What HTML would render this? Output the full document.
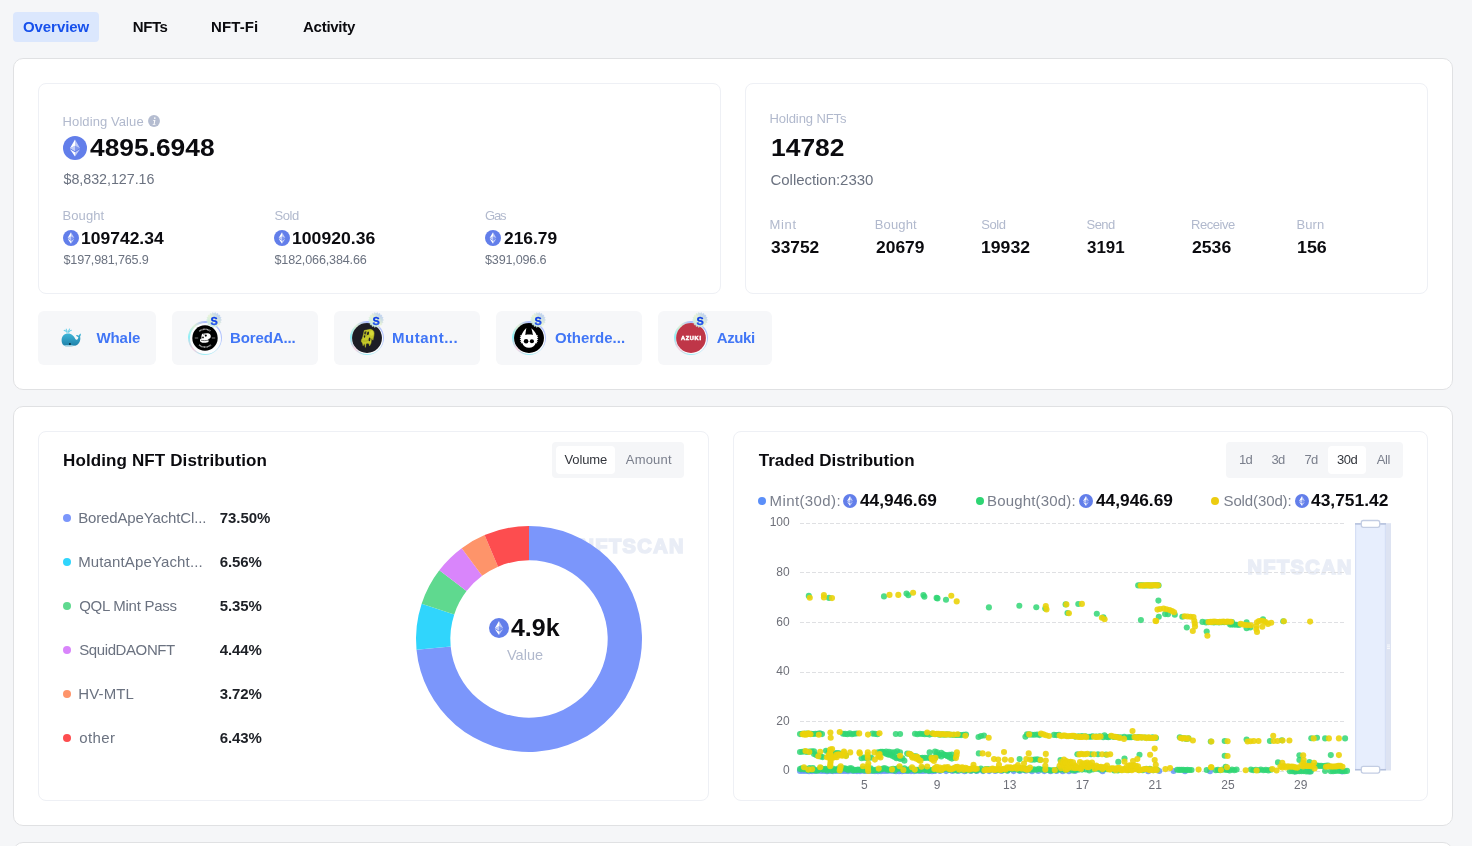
<!DOCTYPE html>
<html lang="en"><head><meta charset="utf-8"><title>NFTScan - Wallet Overview</title>
<style>
*{box-sizing:border-box;margin:0;padding:0}
html,body{width:1472px;height:846px;overflow:hidden}
body{will-change:transform;background:#f5f6f8;font-family:"Liberation Sans",Arial,sans-serif;position:relative;-webkit-font-smoothing:antialiased}
.t{position:absolute;white-space:nowrap;display:block}
.abs,.eth,svg.ab{position:absolute;display:block}
.card{position:absolute;left:13px;width:1440px;background:#fff;border:1px solid #e0e1e3;border-radius:10px}
.inner{position:absolute;background:#fff;border:1px solid #eef0f5;border-radius:8px}
.tab-on{position:absolute;left:13px;top:12px;width:86px;height:30px;border-radius:4px;background:#dbe7fd}
.tag{position:absolute;top:311px;height:54px;border-radius:6px;background:#f6f7f9}
.seg{position:absolute;height:36px;border-radius:4px;background:#f5f6f8}
.seg i{position:absolute;display:block;top:4px;height:28px;border-radius:4px;background:#fff}
.dot{position:absolute;width:8px;height:8px;border-radius:50%}
.ring{position:absolute;display:block;width:34px;height:34px;border-radius:50%;opacity:.85;background:conic-gradient(from 0deg,#9fb2ff 0deg,#a8bcfd 100deg,#bfe6f6 140deg,#8aeef6 185deg,#f6c6da 228deg,#7ceff8 275deg,#dcefd2 318deg,#9fb2ff 360deg)}
.ring i{position:absolute;display:block;left:1.5px;top:1.5px;right:1.5px;bottom:1.5px;border-radius:50%;background:#fff}
.wm{position:absolute;font-weight:700;font-size:20px;line-height:20px;letter-spacing:1.4px;color:#e9edf6;-webkit-text-stroke:1.6px #e9edf6;white-space:nowrap}
</style></head>
<body>
<nav class="tabs"><div class="tab-on"></div><a class="t" style="left:23.00px;top:18.00px;font-size:15px;line-height:17px;letter-spacing:-0.077px;color:#1650ec;font-weight:700;">Overview</a><a class="t" style="left:132.75px;top:18.00px;font-size:15px;line-height:17px;letter-spacing:-0.431px;color:#0b0b0f;font-weight:700;">NFTs</a><a class="t" style="left:211.00px;top:18.00px;font-size:15px;line-height:17px;letter-spacing:0.102px;color:#0b0b0f;font-weight:700;">NFT-Fi</a><a class="t" style="left:303.00px;top:18.00px;font-size:15px;line-height:17px;letter-spacing:-0.263px;color:#0b0b0f;font-weight:700;">Activity</a></nav>
<section class="card" style="top:58px;height:332px">
<div class="inner" style="left:24px;top:24px;width:683px;height:211px">
<span class="t" style="left:23.60px;top:30.00px;font-size:13px;line-height:15px;letter-spacing:0.087px;color:#b1b9cd;">Holding Value</span>
<svg class="ab" style="left:109px;top:31px;width:12px;height:12px" viewBox="0 0 12 12"><circle cx="6" cy="6" r="5.950" fill="#b4bcd0"/><circle cx="6.800" cy="3.100" r=".85" fill="#fff"/><path d="M5 4.900h2.400l-.75 4h.9l-.15.9H4.600l.15-.9h.9l.55-3.100h-.95z" fill="#fff"/></svg>
<svg class="eth" style="left:24px;top:52px;width:24px;height:24px" viewBox="0 0 32 32"><circle cx="16" cy="16" r="16" fill="#627eea"/><g fill="#fff" transform="translate(16 16) scale(.9 .94) translate(-16.5 -16)"><path fill-opacity=".6" d="M16.5 4v8.87l7.5 3.35z"/><path d="M16.5 4L9 16.22l7.5-3.35z"/><path fill-opacity=".6" d="M16.5 21.97v6.03L24 17.62z"/><path d="M16.5 28v-6.03L9 17.62z"/><path fill-opacity=".2" d="M16.5 20.57l7.5-4.35-7.5-3.35z"/><path fill-opacity=".6" d="M9 16.22l7.5 4.35v-7.7z"/></g></svg>
<span class="t" style="left:50.60px;top:51.40px;font-size:24px;line-height:26px;letter-spacing:0.000px;color:#0b0b0f;font-weight:700;transform:scaleX(1.0977);transform-origin:0 0;">4895.6948</span>
<span class="t" style="left:24.50px;top:86.50px;font-size:14.3px;line-height:17px;letter-spacing:-0.040px;color:#6b7280;">$8,832,127.16</span>
<span class="t" style="left:23.50px;top:124.00px;font-size:13px;line-height:15px;letter-spacing:0.082px;color:#b1b9cd;">Bought</span>
<svg class="eth" style="left:24.2px;top:146.2px;width:16px;height:16px" viewBox="0 0 32 32"><circle cx="16" cy="16" r="16" fill="#627eea"/><g fill="#fff" transform="translate(16 16) scale(.9 .94) translate(-16.5 -16)"><path fill-opacity=".6" d="M16.5 4v8.87l7.5 3.35z"/><path d="M16.5 4L9 16.22l7.5-3.35z"/><path fill-opacity=".6" d="M16.5 21.97v6.03L24 17.62z"/><path d="M16.5 28v-6.03L9 17.62z"/><path fill-opacity=".2" d="M16.5 20.57l7.5-4.35-7.5-3.35z"/><path fill-opacity=".6" d="M9 16.22l7.5 4.35v-7.7z"/></g></svg>
<span class="t" style="left:41.94px;top:144.50px;font-size:16.5px;line-height:19px;letter-spacing:0.000px;color:#0b0b0f;font-weight:700;transform:scaleX(1.0601);transform-origin:0 0;">109742.34</span>
<span class="t" style="left:24.50px;top:168.50px;font-size:12.6px;line-height:15px;letter-spacing:-0.176px;color:#6b7280;">$197,981,765.9</span>
<span class="t" style="left:235.50px;top:124.00px;font-size:13px;line-height:15px;letter-spacing:-0.430px;color:#b1b9cd;">Sold</span>
<svg class="eth" style="left:235.2px;top:146.2px;width:16px;height:16px" viewBox="0 0 32 32"><circle cx="16" cy="16" r="16" fill="#627eea"/><g fill="#fff" transform="translate(16 16) scale(.9 .94) translate(-16.5 -16)"><path fill-opacity=".6" d="M16.5 4v8.87l7.5 3.35z"/><path d="M16.5 4L9 16.22l7.5-3.35z"/><path fill-opacity=".6" d="M16.5 21.97v6.03L24 17.62z"/><path d="M16.5 28v-6.03L9 17.62z"/><path fill-opacity=".2" d="M16.5 20.57l7.5-4.35-7.5-3.35z"/><path fill-opacity=".6" d="M9 16.22l7.5 4.35v-7.7z"/></g></svg>
<span class="t" style="left:252.93px;top:144.50px;font-size:16.5px;line-height:19px;letter-spacing:0.000px;color:#0b0b0f;font-weight:700;transform:scaleX(1.0674);transform-origin:0 0;">100920.36</span>
<span class="t" style="left:235.50px;top:168.50px;font-size:12.6px;line-height:15px;letter-spacing:-0.164px;color:#6b7280;">$182,066,384.66</span>
<span class="t" style="left:446.00px;top:124.00px;font-size:13px;line-height:15px;letter-spacing:-1.200px;color:#b1b9cd;">Gas</span>
<svg class="eth" style="left:446.2px;top:146.2px;width:16px;height:16px" viewBox="0 0 32 32"><circle cx="16" cy="16" r="16" fill="#627eea"/><g fill="#fff" transform="translate(16 16) scale(.9 .94) translate(-16.5 -16)"><path fill-opacity=".6" d="M16.5 4v8.87l7.5 3.35z"/><path d="M16.5 4L9 16.22l7.5-3.35z"/><path fill-opacity=".6" d="M16.5 21.97v6.03L24 17.62z"/><path d="M16.5 28v-6.03L9 17.62z"/><path fill-opacity=".2" d="M16.5 20.57l7.5-4.35-7.5-3.35z"/><path fill-opacity=".6" d="M9 16.22l7.5 4.35v-7.7z"/></g></svg>
<span class="t" style="left:464.50px;top:144.50px;font-size:16.5px;line-height:19px;letter-spacing:0.000px;color:#0b0b0f;font-weight:700;transform:scaleX(1.0539);transform-origin:0 0;">216.79</span>
<span class="t" style="left:446.00px;top:168.50px;font-size:12.6px;line-height:15px;letter-spacing:-0.170px;color:#6b7280;">$391,096.6</span>
</div>
<div class="inner" style="left:731px;top:24px;width:683px;height:211px">
<span class="t" style="left:23.50px;top:27.00px;font-size:13px;line-height:15px;letter-spacing:-0.093px;color:#b1b9cd;">Holding NFTs</span>
<span class="t" style="left:24.67px;top:49.50px;font-size:24.5px;line-height:27px;letter-spacing:0.000px;color:#0b0b0f;font-weight:700;transform:scaleX(1.0789);transform-origin:0 0;">14782</span>
<span class="t" style="left:24.50px;top:87.00px;font-size:15px;line-height:17px;letter-spacing:-0.040px;color:#6b7280;">Collection:2330</span>
<span class="t" style="left:23.50px;top:133.25px;font-size:13px;line-height:15px;letter-spacing:0.684px;color:#b1b9cd;">Mint</span>
<span class="t" style="left:128.75px;top:133.25px;font-size:13px;line-height:15px;letter-spacing:0.132px;color:#b1b9cd;">Bought</span>
<span class="t" style="left:235.25px;top:133.25px;font-size:13px;line-height:15px;letter-spacing:-0.430px;color:#b1b9cd;">Sold</span>
<span class="t" style="left:340.50px;top:133.25px;font-size:13px;line-height:15px;letter-spacing:-0.544px;color:#b1b9cd;">Send</span>
<span class="t" style="left:445.00px;top:133.25px;font-size:13px;line-height:15px;letter-spacing:-0.456px;color:#b1b9cd;">Receive</span>
<span class="t" style="left:550.50px;top:133.25px;font-size:13px;line-height:15px;letter-spacing:0.090px;color:#b1b9cd;">Burn</span>
<span class="t" style="left:24.50px;top:153.50px;font-size:16.5px;line-height:19px;letter-spacing:0.000px;color:#0b0b0f;font-weight:700;transform:scaleX(1.0502);transform-origin:0 0;">33752</span>
<span class="t" style="left:130.00px;top:153.50px;font-size:16.5px;line-height:19px;letter-spacing:0.000px;color:#0b0b0f;font-weight:700;transform:scaleX(1.0557);transform-origin:0 0;">20679</span>
<span class="t" style="left:234.68px;top:153.50px;font-size:16.5px;line-height:19px;letter-spacing:0.000px;color:#0b0b0f;font-weight:700;transform:scaleX(1.0681);transform-origin:0 0;">19932</span>
<span class="t" style="left:341.00px;top:153.50px;font-size:16.5px;line-height:19px;letter-spacing:0.000px;color:#0b0b0f;font-weight:700;transform:scaleX(1.0266);transform-origin:0 0;">3191</span>
<span class="t" style="left:446.00px;top:153.50px;font-size:16.5px;line-height:19px;letter-spacing:0.000px;color:#0b0b0f;font-weight:700;transform:scaleX(1.0676);transform-origin:0 0;">2536</span>
<span class="t" style="left:550.92px;top:153.50px;font-size:16.5px;line-height:19px;letter-spacing:0.000px;color:#0b0b0f;font-weight:700;transform:scaleX(1.0815);transform-origin:0 0;">156</span>
</div>
<div class="tags"><div class="tag" style="left:24px;top:252px;width:118px"><svg class="ab" style="left:23px;top:17px;width:20px;height:20px" viewBox="0 0 20 20"><defs><linearGradient id="wg" x1="0" y1="0" x2="0" y2="1"><stop offset="0" stop-color="#3fb6d8"/><stop offset="1" stop-color="#1d7fa8"/></linearGradient></defs><path d="M5.2 1.2c.6.9 1 1.700 1 3M8.600 1c-.7.9-1.200 1.800-1.200 3.200M3.200 2.400c1.200.2 2.200.9 2.700 1.800M10.400 2.200c-1.200.2-2 .9-2.500 1.900" stroke="#6fd0ea" stroke-width="1.100" fill="none" stroke-linecap="round"/><path d="M.6 12.200C.6 8 3.400 5.400 7 5.400c3.700 0 6 2.600 7.200 5.300.5 1.100 1.300 1.400 2.100.8.700-.6 1-1.600 1-2.600-.9-.1-1.800-.7-2.200-1.700 1-.3 2-.1 2.700.500.2-1 .9-1.900 1.900-2.300.3 1.100.1 2.200-.6 3 .6 2.100.2 4.700-1.100 6.500-1.500 2.100-4 3.300-7.600 3.300H5.600C2.600 18.200.6 16 .6 12.200z" fill="url(#wg)"/><path d="M2.200 16.800c1.600 1 4 1.400 7.200 1.400 2 0 3.700-.4 5-1.100-1.400.2-3.400.3-5.600.2-2.600-.1-4.900-.3-6.600-.5z" fill="#bfe9f5"/><circle cx="8.900" cy="16" r=".95" fill="#0b2a3a"/></svg><span class="t" style="left:58.40px;top:18.00px;font-size:15px;line-height:17px;letter-spacing:-0.058px;color:#4176f6;font-weight:700;">Whale</span></div>
<div class="tag" style="left:158px;top:252px;width:146px"><span class="ring" style="left:16px;top:10px"><i></i></span><svg class="ab" style="left:20.2px;top:13.9px;width:26px;height:26px" viewBox="0 0 26 26"><circle cx="13" cy="13" r="12.7" fill="#000"/><path d="M10.3 8.7L15 8.3C17.500 8 19 9.600 18.800 11.400C18.700 12.800 17.600 13.700 16.300 13.900L16.600 16.700C15 18 10.500 18.100 8.600 16.900C7.700 16 7.800 14.400 8.800 13.800L9.600 13.400C9.200 12 9.400 10 10.300 8.700Z" fill="#fff"/><circle cx="13.800" cy="10.600" r="1.050" fill="#000"/><circle cx="11" cy="12.400" r=".85" fill="#000"/><path d="M11.6 8.600l.5 1.500M9 15.200c2 .6 5 .6 7.400-.1" stroke="#000" stroke-width=".55" fill="none"/><path d="M2.800 13h3.400M19.800 13h3.400" stroke="#fff" stroke-width=".6" opacity=".8"/><path d="M7.300 6.300A8.800 8.800 0 0 1 18.700 6.300" stroke="#fff" stroke-width="1.400" stroke-dasharray=".9 .45" fill="none" opacity=".75"/><path d="M7.100 19.900A9.100 9.100 0 0 0 18.900 19.900" stroke="#fff" stroke-width="1.400" stroke-dasharray=".9 .45" fill="none" opacity=".75"/></svg><svg class="ab" style="left:34.3px;top:1.0px;width:16px;height:16px" viewBox="-8 -8 16 16"><defs><linearGradient id="bg1" x1="0" y1="1" x2="1" y2="0"><stop offset="0" stop-color="#b9e8ea"/><stop offset=".5" stop-color="#e8f3d6"/><stop offset="1" stop-color="#a3bcfb"/></linearGradient><linearGradient id="bs1" x1="0" y1="0" x2="0" y2="1"><stop offset="0" stop-color="#0433e6"/><stop offset=".55" stop-color="#0a3ce8"/><stop offset="1" stop-color="#6f98ef"/></linearGradient></defs><polygon points="7.50,0.00 6.11,1.08 7.05,2.57 5.37,3.10 5.75,4.82 3.99,4.75 3.75,6.50 2.12,5.83 1.30,7.39 0.00,6.20 -1.30,7.39 -2.12,5.83 -3.75,6.50 -3.99,4.75 -5.75,4.82 -5.37,3.10 -7.05,2.57 -6.11,1.08 -7.50,0.00 -6.11,-1.08 -7.05,-2.57 -5.37,-3.10 -5.75,-4.82 -3.99,-4.75 -3.75,-6.50 -2.12,-5.83 -1.30,-7.39 -0.00,-6.20 1.30,-7.39 2.12,-5.83 3.75,-6.50 3.99,-4.75 5.75,-4.82 5.37,-3.10 7.05,-2.57 6.11,-1.08" fill="url(#bg1)" stroke="url(#bg1)" stroke-width=".6" stroke-linejoin="round"/><text x="0" y="5.0" transform="translate(.1 0) scale(.95 1)" text-anchor="middle" font-family="Liberation Sans, sans-serif" font-weight="700" font-size="11.5" fill="url(#bs1)" stroke="#0a3ce8" stroke-width=".3">S</text></svg><span class="t" style="left:58.10px;top:18.00px;font-size:15px;line-height:17px;letter-spacing:-0.138px;color:#4176f6;font-weight:700;">BoredA...</span></div>
<div class="tag" style="left:320px;top:252px;width:146px"><span class="ring" style="left:16px;top:10px"><i></i></span><svg class="ab" style="left:18px;top:12px;width:30px;height:30px" viewBox="0 0 30 30"><circle cx="15" cy="15" r="14.950" fill="#1d1d25"/><path d="M18.100 6.300C20.500 6.500 22.300 8 22.100 10.400C22 12 21.900 13 21.500 14.100L20.900 17.200L20.200 15.200L19.400 16L19 20.100L17.600 22.800L17 20.500L15.600 20.300L14 20.600L13.400 24.400L12.800 21L12 20.800L11.100 22.700L10.600 20C9.600 19.400 9.200 18.400 9.400 17.400C9.500 16.400 9.900 15.800 10.400 15.200L11.500 11.200L12.200 7.600C13.500 7.200 15 7 18.100 6.300Z" fill="#c5c929" stroke="#c5c929" stroke-width=".5" stroke-linejoin="round"/><ellipse cx="19.600" cy="10.200" rx="1.700" ry="2.600" fill="#d9dd3e" opacity=".8"/><g fill="#1d1d25"><ellipse cx="13.100" cy="9.900" rx=".75" ry="1.650" transform="rotate(8 13.100 9.900)"/><ellipse cx="16" cy="10.300" rx=".95" ry="1.850" transform="rotate(10 16 10.300)"/><ellipse cx="12.500" cy="13.500" rx=".7" ry="1.250"/><ellipse cx="17.500" cy="16.400" rx=".9" ry="1.900" transform="rotate(8 17.500 16.400)"/></g><path d="M14.400 8l-.5 5.200" stroke="#1d1d25" stroke-width=".45" opacity=".7"/><path d="M10.300 17.800c2 .5 4 .4 5.600-.4" stroke="#9a9e1c" stroke-width=".8" fill="none" opacity=".8"/></svg><svg class="ab" style="left:34.3px;top:1.0px;width:16px;height:16px" viewBox="-8 -8 16 16"><defs><linearGradient id="bg2" x1="0" y1="1" x2="1" y2="0"><stop offset="0" stop-color="#b9e8ea"/><stop offset=".5" stop-color="#e8f3d6"/><stop offset="1" stop-color="#a3bcfb"/></linearGradient><linearGradient id="bs2" x1="0" y1="0" x2="0" y2="1"><stop offset="0" stop-color="#0433e6"/><stop offset=".55" stop-color="#0a3ce8"/><stop offset="1" stop-color="#6f98ef"/></linearGradient></defs><polygon points="7.50,0.00 6.11,1.08 7.05,2.57 5.37,3.10 5.75,4.82 3.99,4.75 3.75,6.50 2.12,5.83 1.30,7.39 0.00,6.20 -1.30,7.39 -2.12,5.83 -3.75,6.50 -3.99,4.75 -5.75,4.82 -5.37,3.10 -7.05,2.57 -6.11,1.08 -7.50,0.00 -6.11,-1.08 -7.05,-2.57 -5.37,-3.10 -5.75,-4.82 -3.99,-4.75 -3.75,-6.50 -2.12,-5.83 -1.30,-7.39 -0.00,-6.20 1.30,-7.39 2.12,-5.83 3.75,-6.50 3.99,-4.75 5.75,-4.82 5.37,-3.10 7.05,-2.57 6.11,-1.08" fill="url(#bg2)" stroke="url(#bg2)" stroke-width=".6" stroke-linejoin="round"/><text x="0" y="5.0" transform="translate(.1 0) scale(.95 1)" text-anchor="middle" font-family="Liberation Sans, sans-serif" font-weight="700" font-size="11.5" fill="url(#bs2)" stroke="#0a3ce8" stroke-width=".3">S</text></svg><span class="t" style="left:58.10px;top:18.00px;font-size:15px;line-height:17px;letter-spacing:0.489px;color:#4176f6;font-weight:700;">Mutant...</span></div>
<div class="tag" style="left:482px;top:252px;width:146px"><span class="ring" style="left:16px;top:10px"><i></i></span><svg class="ab" style="left:18px;top:12px;width:30px;height:30px" viewBox="0 0 30 30"><circle cx="15" cy="15" r="14.950" fill="#000"/><path d="M12.400 5C11.900 7.400 11.500 9.600 11.300 11.900C13.500 11.300 16.800 11.300 18.900 11.900C18.600 9.600 18 7.400 17.300 5.200C19.600 7 21.600 9.400 22.600 12.200L23.900 11.900L23.100 13.600L24.300 14.200L23 15.400L24.400 16.500L22.900 17.200L24 18.800L22.600 18.700L23.200 20.400L21.800 20C20.900 22.800 18.200 24.800 15 24.800C11.800 24.800 9.100 22.800 8.200 20L6.800 20.400L7.400 18.700L6 18.800L7.100 17.200L5.600 16.500L7 15.400L5.700 14.200L6.900 13.600L6.100 11.900L7.400 12.200C8.400 9.400 10.400 7 12.400 5Z" fill="#fff"/><ellipse cx="12.100" cy="18.300" rx="2.300" ry="2.200" fill="#000"/><ellipse cx="17.900" cy="18.300" rx="2.100" ry="2" fill="#000"/></svg><svg class="ab" style="left:34.3px;top:1.0px;width:16px;height:16px" viewBox="-8 -8 16 16"><defs><linearGradient id="bg3" x1="0" y1="1" x2="1" y2="0"><stop offset="0" stop-color="#b9e8ea"/><stop offset=".5" stop-color="#e8f3d6"/><stop offset="1" stop-color="#a3bcfb"/></linearGradient><linearGradient id="bs3" x1="0" y1="0" x2="0" y2="1"><stop offset="0" stop-color="#0433e6"/><stop offset=".55" stop-color="#0a3ce8"/><stop offset="1" stop-color="#6f98ef"/></linearGradient></defs><polygon points="7.50,0.00 6.11,1.08 7.05,2.57 5.37,3.10 5.75,4.82 3.99,4.75 3.75,6.50 2.12,5.83 1.30,7.39 0.00,6.20 -1.30,7.39 -2.12,5.83 -3.75,6.50 -3.99,4.75 -5.75,4.82 -5.37,3.10 -7.05,2.57 -6.11,1.08 -7.50,0.00 -6.11,-1.08 -7.05,-2.57 -5.37,-3.10 -5.75,-4.82 -3.99,-4.75 -3.75,-6.50 -2.12,-5.83 -1.30,-7.39 -0.00,-6.20 1.30,-7.39 2.12,-5.83 3.75,-6.50 3.99,-4.75 5.75,-4.82 5.37,-3.10 7.05,-2.57 6.11,-1.08" fill="url(#bg3)" stroke="url(#bg3)" stroke-width=".6" stroke-linejoin="round"/><text x="0" y="5.0" transform="translate(.1 0) scale(.95 1)" text-anchor="middle" font-family="Liberation Sans, sans-serif" font-weight="700" font-size="11.5" fill="url(#bs3)" stroke="#0a3ce8" stroke-width=".3">S</text></svg><span class="t" style="left:59.10px;top:18.00px;font-size:15px;line-height:17px;letter-spacing:-0.005px;color:#4176f6;font-weight:700;">Otherde...</span></div>
<div class="tag" style="left:644px;top:252px;width:114px"><span class="ring" style="left:16px;top:10px"><i></i></span><svg class="ab" style="left:18px;top:12px;width:30px;height:30px" viewBox="0 0 30 30"><circle cx="15" cy="15" r="14.900" fill="#bf3648"/><text x="15.300" y="17.300" text-anchor="middle" font-family="Liberation Sans, sans-serif" font-weight="700" font-size="5.600" letter-spacing=".75" fill="#fff" stroke="#fff" stroke-width=".5">AZUKI</text></svg><svg class="ab" style="left:34.3px;top:1.0px;width:16px;height:16px" viewBox="-8 -8 16 16"><defs><linearGradient id="bg4" x1="0" y1="1" x2="1" y2="0"><stop offset="0" stop-color="#b9e8ea"/><stop offset=".5" stop-color="#e8f3d6"/><stop offset="1" stop-color="#a3bcfb"/></linearGradient><linearGradient id="bs4" x1="0" y1="0" x2="0" y2="1"><stop offset="0" stop-color="#0433e6"/><stop offset=".55" stop-color="#0a3ce8"/><stop offset="1" stop-color="#6f98ef"/></linearGradient></defs><polygon points="7.50,0.00 6.11,1.08 7.05,2.57 5.37,3.10 5.75,4.82 3.99,4.75 3.75,6.50 2.12,5.83 1.30,7.39 0.00,6.20 -1.30,7.39 -2.12,5.83 -3.75,6.50 -3.99,4.75 -5.75,4.82 -5.37,3.10 -7.05,2.57 -6.11,1.08 -7.50,0.00 -6.11,-1.08 -7.05,-2.57 -5.37,-3.10 -5.75,-4.82 -3.99,-4.75 -3.75,-6.50 -2.12,-5.83 -1.30,-7.39 -0.00,-6.20 1.30,-7.39 2.12,-5.83 3.75,-6.50 3.99,-4.75 5.75,-4.82 5.37,-3.10 7.05,-2.57 6.11,-1.08" fill="url(#bg4)" stroke="url(#bg4)" stroke-width=".6" stroke-linejoin="round"/><text x="0" y="5.0" transform="translate(.1 0) scale(.95 1)" text-anchor="middle" font-family="Liberation Sans, sans-serif" font-weight="700" font-size="11.5" fill="url(#bs4)" stroke="#0a3ce8" stroke-width=".3">S</text></svg><span class="t" style="left:58.70px;top:18.00px;font-size:15px;line-height:17px;letter-spacing:-0.384px;color:#4176f6;font-weight:700;">Azuki</span></div></div>
</section>
<section class="card" style="top:406px;height:420px">
<div class="inner" style="left:24px;top:24px;width:671px;height:370px">
<h3 class="t" style="left:24.00px;top:19.00px;font-size:17px;line-height:19px;letter-spacing:0.120px;color:#0b0b0f;font-weight:700;">Holding NFT Distribution</h3>
<div class="seg" style="left:513px;top:10px;width:132px"><i style="left:4px;width:59px"></i></div>
<span class="t" style="left:525.50px;top:19.90px;font-size:13px;line-height:15px;letter-spacing:-0.126px;color:#33363d;">Volume</span>
<span class="t" style="left:586.75px;top:19.90px;font-size:13px;line-height:15px;letter-spacing:0.212px;color:#7a7f8c;">Amount</span>
<span class="dot" style="left:24px;top:82px;background:#7b96fb"></span>
<span class="t" style="left:39.20px;top:77.30px;font-size:15px;line-height:17px;letter-spacing:-0.145px;color:#6b7280;">BoredApeYachtCl...</span>
<span class="t" style="left:180.70px;top:77.30px;font-size:15px;line-height:17px;letter-spacing:-0.027px;color:#1d2026;font-weight:700;">73.50%</span>
<span class="dot" style="left:24px;top:126px;background:#30d5fc"></span>
<span class="t" style="left:39.20px;top:121.30px;font-size:15px;line-height:17px;letter-spacing:0.136px;color:#6b7280;">MutantApeYacht...</span>
<span class="t" style="left:180.70px;top:121.30px;font-size:15px;line-height:17px;letter-spacing:-0.099px;color:#1d2026;font-weight:700;">6.56%</span>
<span class="dot" style="left:24px;top:170px;background:#5fd98f"></span>
<span class="t" style="left:40.20px;top:165.30px;font-size:15px;line-height:17px;letter-spacing:-0.283px;color:#6b7280;">QQL Mint Pass</span>
<span class="t" style="left:180.70px;top:165.30px;font-size:15px;line-height:17px;letter-spacing:-0.099px;color:#1d2026;font-weight:700;">5.35%</span>
<span class="dot" style="left:24px;top:214px;background:#d985fb"></span>
<span class="t" style="left:40.20px;top:209.30px;font-size:15px;line-height:17px;letter-spacing:-0.396px;color:#6b7280;">SquidDAONFT</span>
<span class="t" style="left:180.70px;top:209.30px;font-size:15px;line-height:17px;letter-spacing:-0.099px;color:#1d2026;font-weight:700;">4.44%</span>
<span class="dot" style="left:24px;top:258px;background:#fe946a"></span>
<span class="t" style="left:39.20px;top:253.30px;font-size:15px;line-height:17px;letter-spacing:0.147px;color:#6b7280;">HV-MTL</span>
<span class="t" style="left:180.70px;top:253.30px;font-size:15px;line-height:17px;letter-spacing:-0.099px;color:#1d2026;font-weight:700;">3.72%</span>
<span class="dot" style="left:24px;top:302px;background:#fd4d4f"></span>
<span class="t" style="left:40.20px;top:297.30px;font-size:15px;line-height:17px;letter-spacing:0.376px;color:#6b7280;">other</span>
<span class="t" style="left:180.70px;top:297.30px;font-size:15px;line-height:17px;letter-spacing:-0.099px;color:#1d2026;font-weight:700;">6.43%</span>
<span class="wm" style="left:540.5px;top:104px">NFTSCAN</span>
<svg class="ab" style="left:375.0px;top:91.65px;width:230px;height:230px" viewBox="-115 -115 230 230"><path d="M0.00 -113.00A113.0 113.0 0 1 1 -112.50 10.63L-78.35 7.41A78.7 78.7 0 1 0 0.00 -78.70Z" fill="#7b96fb"/><path d="M-112.50 10.63A113.0 113.0 0 0 1 -107.34 -35.32L-74.76 -24.60A78.7 78.7 0 0 0 -78.35 7.41Z" fill="#30d5fc"/><path d="M-107.34 -35.32A113.0 113.0 0 0 1 -89.68 -68.75L-62.46 -47.88A78.7 78.7 0 0 0 -74.76 -24.60Z" fill="#5fd98f"/><path d="M-89.68 -68.75A113.0 113.0 0 0 1 -67.28 -90.79L-46.86 -63.23A78.7 78.7 0 0 0 -62.46 -47.88Z" fill="#d985fb"/><path d="M-67.28 -90.79A113.0 113.0 0 0 1 -44.42 -103.90L-30.94 -72.36A78.7 78.7 0 0 0 -46.86 -63.23Z" fill="#fe946a"/><path d="M-44.42 -103.90A113.0 113.0 0 0 1 -0.00 -113.00L-0.00 -78.70A78.7 78.7 0 0 0 -30.94 -72.36Z" fill="#fd4d4f"/></svg>
<svg class="eth" style="left:450px;top:186.3px;width:20px;height:20px" viewBox="0 0 32 32"><circle cx="16" cy="16" r="16" fill="#627eea"/><g fill="#fff" transform="translate(16 16) scale(.9 .94) translate(-16.5 -16)"><path fill-opacity=".6" d="M16.5 4v8.87l7.5 3.35z"/><path d="M16.5 4L9 16.22l7.5-3.35z"/><path fill-opacity=".6" d="M16.5 21.97v6.03L24 17.62z"/><path d="M16.5 28v-6.03L9 17.62z"/><path fill-opacity=".2" d="M16.5 20.57l7.5-4.35-7.5-3.35z"/><path fill-opacity=".6" d="M9 16.22l7.5 4.35v-7.7z"/></g></svg>
<span class="t" style="left:472.30px;top:183.10px;font-size:24px;line-height:26px;letter-spacing:0.000px;color:#0b0b0f;font-weight:700;transform:scaleX(1.0388);transform-origin:0 0;">4.9k</span>
<span class="t" style="left:468.00px;top:214.70px;font-size:14.5px;line-height:17px;letter-spacing:0.014px;color:#b1b9cd;">Value</span>
</div>
<div class="inner" style="left:719px;top:24px;width:695px;height:370px">
<h3 class="t" style="left:24.75px;top:19.00px;font-size:17px;line-height:19px;letter-spacing:0.003px;color:#0b0b0f;font-weight:700;">Traded Distribution</h3>
<div class="seg" style="left:492px;top:10px;width:177px"><i style="left:102px;width:38px"></i></div>
<span class="t" style="left:505.00px;top:19.90px;font-size:13px;line-height:15px;letter-spacing:-0.730px;color:#7a7f8c;">1d</span>
<span class="t" style="left:537.50px;top:19.90px;font-size:13px;line-height:15px;letter-spacing:-0.730px;color:#7a7f8c;">3d</span>
<span class="t" style="left:570.50px;top:19.90px;font-size:13px;line-height:15px;letter-spacing:-0.730px;color:#7a7f8c;">7d</span>
<span class="t" style="left:603.00px;top:19.90px;font-size:13px;line-height:15px;letter-spacing:-0.480px;color:#33363d;">30d</span>
<span class="t" style="left:642.75px;top:19.90px;font-size:13px;line-height:15px;letter-spacing:-0.405px;color:#7a7f8c;">All</span>
<span class="dot" style="left:24px;top:65.19999999999999px;background:#5b8ff9"></span>
<span class="t" style="left:35.50px;top:60.00px;font-size:15px;line-height:17px;letter-spacing:0.405px;color:#7a7f8c;">Mint(30d):</span>
<svg class="eth" style="left:109.3px;top:62.2px;width:14px;height:14px" viewBox="0 0 32 32"><circle cx="16" cy="16" r="16" fill="#627eea"/><g fill="#fff" transform="translate(16 16) scale(.9 .94) translate(-16.5 -16)"><path fill-opacity=".6" d="M16.5 4v8.87l7.5 3.35z"/><path d="M16.5 4L9 16.22l7.5-3.35z"/><path fill-opacity=".6" d="M16.5 21.97v6.03L24 17.62z"/><path d="M16.5 28v-6.03L9 17.62z"/><path fill-opacity=".2" d="M16.5 20.57l7.5-4.35-7.5-3.35z"/><path fill-opacity=".6" d="M9 16.22l7.5 4.35v-7.7z"/></g></svg>
<span class="t" style="left:126.00px;top:59.50px;font-size:16px;line-height:18px;letter-spacing:0.000px;color:#0b0b0f;font-weight:700;transform:scaleX(1.0802);transform-origin:0 0;">44,946.69</span>
<span class="dot" style="left:242px;top:65.19999999999999px;background:#2ed573"></span>
<span class="t" style="left:253.00px;top:60.00px;font-size:15px;line-height:17px;letter-spacing:0.176px;color:#7a7f8c;">Bought(30d):</span>
<svg class="eth" style="left:344.8px;top:62.2px;width:14px;height:14px" viewBox="0 0 32 32"><circle cx="16" cy="16" r="16" fill="#627eea"/><g fill="#fff" transform="translate(16 16) scale(.9 .94) translate(-16.5 -16)"><path fill-opacity=".6" d="M16.5 4v8.87l7.5 3.35z"/><path d="M16.5 4L9 16.22l7.5-3.35z"/><path fill-opacity=".6" d="M16.5 21.97v6.03L24 17.62z"/><path d="M16.5 28v-6.03L9 17.62z"/><path fill-opacity=".2" d="M16.5 20.57l7.5-4.35-7.5-3.35z"/><path fill-opacity=".6" d="M9 16.22l7.5 4.35v-7.7z"/></g></svg>
<span class="t" style="left:361.50px;top:59.50px;font-size:16px;line-height:18px;letter-spacing:0.000px;color:#0b0b0f;font-weight:700;transform:scaleX(1.0802);transform-origin:0 0;">44,946.69</span>
<span class="dot" style="left:477px;top:65.19999999999999px;background:#eccc10"></span>
<span class="t" style="left:489.50px;top:60.00px;font-size:15px;line-height:17px;letter-spacing:-0.115px;color:#7a7f8c;">Sold(30d):</span>
<svg class="eth" style="left:561px;top:62.2px;width:14px;height:14px" viewBox="0 0 32 32"><circle cx="16" cy="16" r="16" fill="#627eea"/><g fill="#fff" transform="translate(16 16) scale(.9 .94) translate(-16.5 -16)"><path fill-opacity=".6" d="M16.5 4v8.87l7.5 3.35z"/><path d="M16.5 4L9 16.22l7.5-3.35z"/><path fill-opacity=".6" d="M16.5 21.97v6.03L24 17.62z"/><path d="M16.5 28v-6.03L9 17.62z"/><path fill-opacity=".2" d="M16.5 20.57l7.5-4.35-7.5-3.35z"/><path fill-opacity=".6" d="M9 16.22l7.5 4.35v-7.7z"/></g></svg>
<span class="t" style="left:577.25px;top:59.50px;font-size:16px;line-height:18px;letter-spacing:0.000px;color:#0b0b0f;font-weight:700;transform:scaleX(1.0872);transform-origin:0 0;">43,751.42</span>
<span class="wm" style="left:513.5px;top:125px">NFTSCAN</span>
<svg class="ab" style="left:26px;top:80px;width:640px;height:282px" viewBox="0 0 640 282" font-family="Liberation Sans, sans-serif" font-size="12"><g stroke="#dfe0e3" stroke-width="1" stroke-dasharray="4 2"><path d="M40 11.5H585"/><path d="M40 60.5H585"/><path d="M40 110.5H585"/><path d="M40 160.5H585"/><path d="M40 209.5H585"/><path d="M40 259.5H585"/></g><g fill="#6e7079" text-anchor="end"><text x="29.7" y="14.1">100</text><text x="29.7" y="63.9">80</text><text x="29.7" y="113.6">60</text><text x="29.7" y="163.1">40</text><text x="29.7" y="213.0">20</text><text x="29.7" y="262.0">0</text></g><g fill="#6e7079" text-anchor="middle"><text x="104.4" y="277">5</text><text x="177.1" y="277">9</text><text x="249.8" y="277">13</text><text x="322.5" y="277">17</text><text x="395.2" y="277">21</text><text x="468" y="277">25</text><text x="540.8" y="277">29</text></g><g fill="#5b8ff9" fill-opacity="0.8"><circle cx="40.0" cy="258.9" r="3.05"/><circle cx="43.0" cy="259.0" r="3.05"/><circle cx="46.0" cy="259.0" r="3.05"/><circle cx="49.0" cy="259.2" r="3.05"/><circle cx="52.0" cy="259.1" r="3.05"/><circle cx="55.0" cy="258.9" r="3.05"/><circle cx="58.0" cy="258.8" r="3.05"/><circle cx="61.0" cy="259.0" r="3.05"/><circle cx="64.0" cy="258.9" r="3.05"/><circle cx="67.0" cy="259.2" r="3.05"/><circle cx="70.0" cy="259.0" r="3.05"/><circle cx="73.0" cy="259.1" r="3.05"/><circle cx="76.0" cy="259.0" r="3.05"/><circle cx="79.0" cy="259.0" r="3.05"/><circle cx="82.0" cy="259.0" r="3.05"/><circle cx="85.0" cy="259.0" r="3.05"/><circle cx="88.0" cy="259.1" r="3.05"/><circle cx="91.0" cy="258.8" r="3.05"/><circle cx="94.0" cy="258.9" r="3.05"/><circle cx="97.0" cy="259.1" r="3.05"/><circle cx="100.0" cy="259.1" r="3.05"/><circle cx="103.0" cy="258.8" r="3.05"/><circle cx="106.0" cy="259.0" r="3.05"/><circle cx="109.0" cy="259.0" r="3.05"/><circle cx="112.0" cy="258.9" r="3.05"/><circle cx="115.0" cy="259.1" r="3.05"/><circle cx="118.0" cy="259.2" r="3.05"/><circle cx="121.0" cy="259.1" r="3.05"/><circle cx="124.0" cy="258.9" r="3.05"/><circle cx="127.0" cy="258.9" r="3.05"/><circle cx="130.0" cy="258.8" r="3.05"/><circle cx="133.0" cy="259.0" r="3.05"/><circle cx="136.0" cy="259.2" r="3.05"/><circle cx="139.0" cy="259.2" r="3.05"/><circle cx="142.0" cy="259.2" r="3.05"/><circle cx="145.0" cy="258.9" r="3.05"/><circle cx="148.0" cy="259.0" r="3.05"/><circle cx="151.0" cy="259.1" r="3.05"/><circle cx="154.0" cy="259.1" r="3.05"/><circle cx="157.0" cy="258.8" r="3.05"/><circle cx="160.0" cy="258.9" r="3.05"/><circle cx="163.0" cy="258.9" r="3.05"/><circle cx="166.0" cy="258.8" r="3.05"/><circle cx="169.0" cy="259.1" r="3.05"/><circle cx="172.0" cy="259.2" r="3.05"/><circle cx="175.0" cy="259.0" r="3.05"/><circle cx="180.0" cy="259.0" r="3.05"/><circle cx="186.1" cy="259.1" r="3.05"/><circle cx="192.3" cy="258.9" r="3.05"/><circle cx="198.4" cy="258.9" r="3.05"/><circle cx="204.5" cy="259.2" r="3.05"/><circle cx="210.7" cy="258.9" r="3.05"/><circle cx="216.8" cy="259.0" r="3.05"/><circle cx="223.0" cy="259.1" r="3.05"/><circle cx="229.1" cy="259.1" r="3.05"/><circle cx="235.2" cy="258.9" r="3.05"/><circle cx="241.4" cy="258.9" r="3.05"/><circle cx="247.5" cy="258.8" r="3.05"/><circle cx="253.6" cy="259.1" r="3.05"/><circle cx="259.8" cy="258.9" r="3.05"/><circle cx="265.9" cy="258.8" r="3.05"/><circle cx="272.0" cy="259.2" r="3.05"/><circle cx="278.2" cy="258.9" r="3.05"/><circle cx="284.3" cy="259.1" r="3.05"/><circle cx="290.5" cy="259.2" r="3.05"/><circle cx="296.6" cy="258.9" r="3.05"/><circle cx="302.7" cy="259.2" r="3.05"/><circle cx="308.9" cy="259.2" r="3.05"/><circle cx="315.0" cy="258.9" r="3.05"/><circle cx="342.6" cy="259.2" r="3.05"/><circle cx="388.2" cy="259.2" r="3.05"/><circle cx="399.2" cy="259" r="3.05"/><circle cx="413.6" cy="259" r="3.05"/><circle cx="425" cy="259.2" r="3.05"/><circle cx="450" cy="259.2" r="3.05"/><circle cx="535.6" cy="259.4" r="3.05"/><circle cx="549.9" cy="259.4" r="3.05"/><circle cx="582.2" cy="259.4" r="3.05"/></g><g fill="#2ed573" fill-opacity="0.84"><circle cx="48.8" cy="83.9" r="3.05"/><circle cx="69" cy="85.9" r="3.05"/><circle cx="124" cy="84.4" r="3.05"/><circle cx="146.5" cy="81.6" r="3.05"/><circle cx="148.4" cy="83.3" r="3.05"/><circle cx="163.4" cy="83.1" r="3.05"/><circle cx="164.4" cy="84.7" r="3.05"/><circle cx="176.6" cy="85.9" r="3.05"/><circle cx="177.5" cy="86.4" r="3.05"/><circle cx="186" cy="87.8" r="3.05"/><circle cx="228.9" cy="95.4" r="3.05"/><circle cx="259.3" cy="93.8" r="3.05"/><circle cx="276.3" cy="95.2" r="3.05"/><circle cx="285.3" cy="96.5" r="3.05"/><circle cx="305.6" cy="92.4" r="3.05"/><circle cx="307.5" cy="101" r="3.05"/><circle cx="318.3" cy="92" r="3.05"/><circle cx="336.8" cy="101.8" r="3.05"/><circle cx="343.4" cy="105.4" r="3.05"/><circle cx="380.9" cy="108.1" r="3.05"/><circle cx="378.2" cy="73.4" r="3.05"/><circle cx="380.2" cy="73.3" r="3.05"/><circle cx="382.3" cy="73.3" r="3.05"/><circle cx="384.3" cy="73.5" r="3.05"/><circle cx="386.4" cy="73.5" r="3.05"/><circle cx="388.4" cy="73.3" r="3.05"/><circle cx="390.4" cy="73.5" r="3.05"/><circle cx="392.5" cy="73.5" r="3.05"/><circle cx="394.5" cy="73.3" r="3.05"/><circle cx="396.6" cy="73.3" r="3.05"/><circle cx="398.6" cy="73.4" r="3.05"/><circle cx="398.4" cy="88.6" r="3.05"/><circle cx="405.1" cy="102.1" r="3.05"/><circle cx="408" cy="102.2" r="3.05"/><circle cx="414.8" cy="102.8" r="3.05"/><circle cx="398.8" cy="104.8" r="3.05"/><circle cx="422.3" cy="104.8" r="3.05"/><circle cx="426.8" cy="115.5" r="3.05"/><circle cx="442.5" cy="109.9" r="3.05"/><circle cx="446.7" cy="119.6" r="3.05"/><circle cx="446.0" cy="110.4" r="3.05"/><circle cx="448.6" cy="110.2" r="3.05"/><circle cx="451.2" cy="110.2" r="3.05"/><circle cx="453.8" cy="110.5" r="3.05"/><circle cx="456.4" cy="110.2" r="3.05"/><circle cx="459.0" cy="110.4" r="3.05"/><circle cx="461.6" cy="110.2" r="3.05"/><circle cx="464.2" cy="110.2" r="3.05"/><circle cx="466.8" cy="110.1" r="3.05"/><circle cx="469.4" cy="110.4" r="3.05"/><circle cx="472.0" cy="110.0" r="3.05"/><circle cx="470.1" cy="112.6" r="3.05"/><circle cx="472.3" cy="112.6" r="3.05"/><circle cx="474.6" cy="112.6" r="3.05"/><circle cx="476.8" cy="112.7" r="3.05"/><circle cx="479.1" cy="113.0" r="3.05"/><circle cx="486.6" cy="110.3" r="3.05"/><circle cx="486.6" cy="116.3" r="3.05"/><circle cx="490.3" cy="115.5" r="3.05"/><circle cx="503" cy="107.3" r="3.05"/><circle cx="523.3" cy="109.3" r="3.05"/><circle cx="40.0" cy="222.1" r="3.05"/><circle cx="42.2" cy="221.8" r="3.05"/><circle cx="44.4" cy="221.8" r="3.05"/><circle cx="46.6" cy="221.6" r="3.05"/><circle cx="48.8" cy="221.9" r="3.05"/><circle cx="51.0" cy="221.8" r="3.05"/><circle cx="53.2" cy="222.0" r="3.05"/><circle cx="55.4" cy="221.7" r="3.05"/><circle cx="57.6" cy="221.8" r="3.05"/><circle cx="59.8" cy="221.4" r="3.05"/><circle cx="62.0" cy="222.1" r="3.05"/><circle cx="83.0" cy="221.8" r="3.05"/><circle cx="85.2" cy="221.9" r="3.05"/><circle cx="87.5" cy="222.3" r="3.05"/><circle cx="89.8" cy="221.4" r="3.05"/><circle cx="92.0" cy="222.2" r="3.05"/><circle cx="94.2" cy="221.8" r="3.05"/><circle cx="96.5" cy="221.5" r="3.05"/><circle cx="112.5" cy="221.6" r="3.05"/><circle cx="115.0" cy="221.9" r="3.05"/><circle cx="117.5" cy="222.2" r="3.05"/><circle cx="135.8" cy="222" r="3.05"/><circle cx="140.1" cy="222" r="3.05"/><circle cx="155.0" cy="221.7" r="3.05"/><circle cx="157.4" cy="222.2" r="3.05"/><circle cx="159.9" cy="221.7" r="3.05"/><circle cx="162.3" cy="222.0" r="3.05"/><circle cx="164.7" cy="222.3" r="3.05"/><circle cx="167.1" cy="222.1" r="3.05"/><circle cx="169.6" cy="222.6" r="3.05"/><circle cx="172.0" cy="221.8" r="3.05"/><circle cx="174.4" cy="222.0" r="3.05"/><circle cx="176.9" cy="222.0" r="3.05"/><circle cx="179.3" cy="222.8" r="3.05"/><circle cx="181.7" cy="222.4" r="3.05"/><circle cx="184.1" cy="222.7" r="3.05"/><circle cx="186.6" cy="222.4" r="3.05"/><circle cx="189.0" cy="222.5" r="3.05"/><circle cx="191.4" cy="222.7" r="3.05"/><circle cx="193.9" cy="223.0" r="3.05"/><circle cx="196.3" cy="223.0" r="3.05"/><circle cx="198.7" cy="222.9" r="3.05"/><circle cx="201.1" cy="223.1" r="3.05"/><circle cx="203.6" cy="222.8" r="3.05"/><circle cx="206.0" cy="222.6" r="3.05"/><circle cx="218.5" cy="225" r="3.05"/><circle cx="221" cy="224" r="3.05"/><circle cx="224" cy="223.5" r="3.05"/><circle cx="265.4" cy="224.7" r="3.05"/><circle cx="267.0" cy="222.4" r="3.05"/><circle cx="269.5" cy="222.4" r="3.05"/><circle cx="272.0" cy="222.8" r="3.05"/><circle cx="274.6" cy="222.7" r="3.05"/><circle cx="277.1" cy="222.5" r="3.05"/><circle cx="279.6" cy="223.1" r="3.05"/><circle cx="294.0" cy="222.9" r="3.05"/><circle cx="296.5" cy="223.1" r="3.05"/><circle cx="299.0" cy="222.8" r="3.05"/><circle cx="315.0" cy="224.6" r="3.05"/><circle cx="318.5" cy="224.2" r="3.05"/><circle cx="322.0" cy="224.0" r="3.05"/><circle cx="325.6" cy="224.4" r="3.05"/><circle cx="329.1" cy="224.7" r="3.05"/><circle cx="332.6" cy="224.3" r="3.05"/><circle cx="336.1" cy="224.6" r="3.05"/><circle cx="339.7" cy="224.3" r="3.05"/><circle cx="343.2" cy="225.2" r="3.05"/><circle cx="346.7" cy="225.0" r="3.05"/><circle cx="350.2" cy="224.6" r="3.05"/><circle cx="353.7" cy="225.0" r="3.05"/><circle cx="357.3" cy="225.0" r="3.05"/><circle cx="360.8" cy="225.3" r="3.05"/><circle cx="364.3" cy="224.8" r="3.05"/><circle cx="367.8" cy="225.3" r="3.05"/><circle cx="371.3" cy="225.3" r="3.05"/><circle cx="374.9" cy="225.3" r="3.05"/><circle cx="378.4" cy="225.0" r="3.05"/><circle cx="381.9" cy="225.5" r="3.05"/><circle cx="385.4" cy="225.5" r="3.05"/><circle cx="389.0" cy="225.8" r="3.05"/><circle cx="392.5" cy="225.4" r="3.05"/><circle cx="396.0" cy="226.0" r="3.05"/><circle cx="331.2" cy="224.7" r="3.05"/><circle cx="344.5" cy="223.3" r="3.05"/><circle cx="348.3" cy="225.2" r="3.05"/><circle cx="369.7" cy="225.2" r="3.05"/><circle cx="419.8" cy="225.3" r="3.05"/><circle cx="422.0" cy="226.3" r="3.05"/><circle cx="424.2" cy="226.3" r="3.05"/><circle cx="426.3" cy="226.9" r="3.05"/><circle cx="428.5" cy="226.4" r="3.05"/><circle cx="450.8" cy="229.5" r="3.05"/><circle cx="464.7" cy="229" r="3.05"/><circle cx="486.6" cy="227.6" r="3.05"/><circle cx="509.9" cy="229" r="3.05"/><circle cx="521.8" cy="228.2" r="3.05"/><circle cx="551.3" cy="226.2" r="3.05"/><circle cx="557" cy="225.7" r="3.05"/><circle cx="565.1" cy="226.4" r="3.05"/><circle cx="585.1" cy="226.4" r="3.05"/><circle cx="40.0" cy="240.0" r="3.05"/><circle cx="42.3" cy="239.8" r="3.05"/><circle cx="44.7" cy="239.5" r="3.05"/><circle cx="47.0" cy="239.9" r="3.05"/><circle cx="49.3" cy="239.5" r="3.05"/><circle cx="51.7" cy="239.2" r="3.05"/><circle cx="54.0" cy="239.3" r="3.05"/><circle cx="54.0" cy="242.0" r="3.05"/><circle cx="56.1" cy="243.1" r="3.05"/><circle cx="58.3" cy="243.6" r="3.05"/><circle cx="60.5" cy="244.4" r="3.05"/><circle cx="62.6" cy="245.1" r="3.05"/><circle cx="66.0" cy="238.8" r="3.05"/><circle cx="68.5" cy="240.0" r="3.05"/><circle cx="71.0" cy="239.9" r="3.05"/><circle cx="73.5" cy="241.7" r="3.05"/><circle cx="76.0" cy="241.0" r="3.05"/><circle cx="78.5" cy="241.1" r="3.05"/><circle cx="81.0" cy="241.7" r="3.05"/><circle cx="83.5" cy="243.0" r="3.05"/><circle cx="86.0" cy="243.6" r="3.05"/><circle cx="101.6" cy="246.2" r="3.05"/><circle cx="104.0" cy="245.6" r="3.05"/><circle cx="106.3" cy="246.1" r="3.05"/><circle cx="108.6" cy="245.8" r="3.05"/><circle cx="111.0" cy="245.6" r="3.05"/><circle cx="120.6" cy="240.4" r="3.05"/><circle cx="122.6" cy="239.8" r="3.05"/><circle cx="124.6" cy="240.9" r="3.05"/><circle cx="126.5" cy="242.0" r="3.05"/><circle cx="128.5" cy="242.7" r="3.05"/><circle cx="130.5" cy="242.7" r="3.05"/><circle cx="132.5" cy="243.9" r="3.05"/><circle cx="134.5" cy="245.0" r="3.05"/><circle cx="136.5" cy="246.3" r="3.05"/><circle cx="138.5" cy="245.6" r="3.05"/><circle cx="140.4" cy="246.9" r="3.05"/><circle cx="142.4" cy="246.2" r="3.05"/><circle cx="144.4" cy="248.7" r="3.05"/><circle cx="118.0" cy="240.3" r="3.05"/><circle cx="120.8" cy="239.9" r="3.05"/><circle cx="123.5" cy="240.0" r="3.05"/><circle cx="126.2" cy="239.5" r="3.05"/><circle cx="129.0" cy="239.8" r="3.05"/><circle cx="131.8" cy="240.4" r="3.05"/><circle cx="134.5" cy="240.2" r="3.05"/><circle cx="137.2" cy="239.4" r="3.05"/><circle cx="140.0" cy="240.3" r="3.05"/><circle cx="147.2" cy="241.6" r="3.05"/><circle cx="149.4" cy="241.8" r="3.05"/><circle cx="151.6" cy="243.5" r="3.05"/><circle cx="153.9" cy="244.4" r="3.05"/><circle cx="156.1" cy="244.2" r="3.05"/><circle cx="158.3" cy="246.1" r="3.05"/><circle cx="160.5" cy="246.0" r="3.05"/><circle cx="162.4" cy="245.9" r="3.05"/><circle cx="164.9" cy="245.9" r="3.05"/><circle cx="167.4" cy="245.7" r="3.05"/><circle cx="170.0" cy="246.2" r="3.05"/><circle cx="172.5" cy="245.8" r="3.05"/><circle cx="175.0" cy="246.3" r="3.05"/><circle cx="169.6" cy="240.4" r="3.05"/><circle cx="175.0" cy="239.6" r="3.05"/><circle cx="177.1" cy="240.3" r="3.05"/><circle cx="179.2" cy="242.7" r="3.05"/><circle cx="181.3" cy="240.9" r="3.05"/><circle cx="183.4" cy="242.2" r="3.05"/><circle cx="185.6" cy="243.1" r="3.05"/><circle cx="187.7" cy="244.2" r="3.05"/><circle cx="189.8" cy="245.6" r="3.05"/><circle cx="191.9" cy="246.6" r="3.05"/><circle cx="194.0" cy="245.6" r="3.05"/><circle cx="176.0" cy="244.1" r="3.05"/><circle cx="178.7" cy="243.3" r="3.05"/><circle cx="181.3" cy="244.4" r="3.05"/><circle cx="184.0" cy="242.9" r="3.05"/><circle cx="186.7" cy="243.5" r="3.05"/><circle cx="189.3" cy="242.8" r="3.05"/><circle cx="192.0" cy="242.6" r="3.05"/><circle cx="218.8" cy="241.4" r="3.05"/><circle cx="259.6" cy="247.1" r="3.05"/><circle cx="272.0" cy="247.7" r="3.05"/><circle cx="274.7" cy="247.6" r="3.05"/><circle cx="277.3" cy="247.2" r="3.05"/><circle cx="280.0" cy="247.9" r="3.05"/><circle cx="300.5" cy="248" r="3.05"/><circle cx="317.4" cy="242.3" r="3.05"/><circle cx="331" cy="242.3" r="3.05"/><circle cx="338" cy="242.3" r="3.05"/><circle cx="346" cy="242.6" r="3.05"/><circle cx="358.3" cy="249.8" r="3.05"/><circle cx="364.5" cy="246.6" r="3.05"/><circle cx="379.5" cy="242.8" r="3.05"/><circle cx="464.7" cy="243.8" r="3.05"/><circle cx="539.4" cy="243.3" r="3.05"/><circle cx="570.8" cy="243.1" r="3.05"/><circle cx="40.0" cy="257.1" r="3.05"/><circle cx="41.6" cy="256.3" r="3.05"/><circle cx="43.2" cy="257.3" r="3.05"/><circle cx="44.8" cy="256.6" r="3.05"/><circle cx="46.4" cy="257.3" r="3.05"/><circle cx="48.0" cy="258.3" r="3.05"/><circle cx="49.6" cy="256.1" r="3.05"/><circle cx="51.2" cy="258.3" r="3.05"/><circle cx="52.9" cy="256.1" r="3.05"/><circle cx="54.5" cy="258.2" r="3.05"/><circle cx="56.1" cy="258.4" r="3.05"/><circle cx="57.7" cy="258.5" r="3.05"/><circle cx="59.3" cy="257.3" r="3.05"/><circle cx="60.9" cy="256.0" r="3.05"/><circle cx="62.5" cy="257.6" r="3.05"/><circle cx="64.1" cy="257.4" r="3.05"/><circle cx="65.7" cy="256.7" r="3.05"/><circle cx="67.3" cy="258.4" r="3.05"/><circle cx="68.9" cy="256.5" r="3.05"/><circle cx="70.5" cy="256.9" r="3.05"/><circle cx="72.1" cy="258.6" r="3.05"/><circle cx="73.8" cy="256.8" r="3.05"/><circle cx="75.4" cy="258.1" r="3.05"/><circle cx="77.0" cy="257.7" r="3.05"/><circle cx="78.6" cy="256.4" r="3.05"/><circle cx="80.2" cy="258.1" r="3.05"/><circle cx="81.8" cy="256.3" r="3.05"/><circle cx="83.4" cy="256.5" r="3.05"/><circle cx="85.0" cy="256.4" r="3.05"/><circle cx="86.6" cy="257.0" r="3.05"/><circle cx="88.2" cy="257.9" r="3.05"/><circle cx="89.8" cy="256.4" r="3.05"/><circle cx="91.4" cy="256.4" r="3.05"/><circle cx="93.0" cy="258.4" r="3.05"/><circle cx="94.6" cy="257.7" r="3.05"/><circle cx="96.2" cy="258.1" r="3.05"/><circle cx="97.9" cy="257.5" r="3.05"/><circle cx="99.5" cy="257.9" r="3.05"/><circle cx="101.1" cy="257.7" r="3.05"/><circle cx="102.7" cy="256.9" r="3.05"/><circle cx="104.3" cy="258.5" r="3.05"/><circle cx="105.9" cy="256.5" r="3.05"/><circle cx="107.5" cy="257.0" r="3.05"/><circle cx="109.1" cy="256.8" r="3.05"/><circle cx="110.7" cy="256.4" r="3.05"/><circle cx="112.3" cy="258.4" r="3.05"/><circle cx="113.9" cy="258.5" r="3.05"/><circle cx="115.5" cy="257.7" r="3.05"/><circle cx="117.1" cy="258.2" r="3.05"/><circle cx="118.8" cy="258.0" r="3.05"/><circle cx="120.4" cy="257.4" r="3.05"/><circle cx="122.0" cy="257.3" r="3.05"/><circle cx="123.6" cy="256.2" r="3.05"/><circle cx="125.2" cy="256.3" r="3.05"/><circle cx="126.8" cy="257.6" r="3.05"/><circle cx="128.4" cy="257.6" r="3.05"/><circle cx="130.0" cy="258.0" r="3.05"/><circle cx="131.6" cy="257.2" r="3.05"/><circle cx="133.2" cy="256.9" r="3.05"/><circle cx="134.8" cy="258.6" r="3.05"/><circle cx="136.4" cy="256.9" r="3.05"/><circle cx="138.0" cy="256.3" r="3.05"/><circle cx="139.6" cy="256.4" r="3.05"/><circle cx="141.2" cy="256.5" r="3.05"/><circle cx="142.9" cy="258.1" r="3.05"/><circle cx="144.5" cy="256.3" r="3.05"/><circle cx="146.1" cy="258.1" r="3.05"/><circle cx="147.7" cy="258.4" r="3.05"/><circle cx="149.3" cy="257.4" r="3.05"/><circle cx="150.9" cy="257.3" r="3.05"/><circle cx="152.5" cy="257.2" r="3.05"/><circle cx="154.1" cy="257.7" r="3.05"/><circle cx="155.7" cy="258.4" r="3.05"/><circle cx="157.3" cy="257.9" r="3.05"/><circle cx="158.9" cy="258.2" r="3.05"/><circle cx="160.5" cy="258.0" r="3.05"/><circle cx="162.1" cy="256.3" r="3.05"/><circle cx="163.8" cy="256.8" r="3.05"/><circle cx="165.4" cy="258.1" r="3.05"/><circle cx="167.0" cy="257.8" r="3.05"/><circle cx="168.6" cy="258.6" r="3.05"/><circle cx="170.2" cy="258.2" r="3.05"/><circle cx="171.8" cy="258.0" r="3.05"/><circle cx="173.4" cy="258.1" r="3.05"/><circle cx="175.0" cy="258.3" r="3.05"/><circle cx="175.0" cy="257.0" r="3.05"/><circle cx="177.4" cy="257.3" r="3.05"/><circle cx="179.8" cy="258.3" r="3.05"/><circle cx="182.2" cy="257.9" r="3.05"/><circle cx="184.7" cy="256.7" r="3.05"/><circle cx="187.1" cy="256.7" r="3.05"/><circle cx="189.5" cy="257.9" r="3.05"/><circle cx="191.9" cy="256.8" r="3.05"/><circle cx="194.3" cy="258.3" r="3.05"/><circle cx="196.7" cy="258.4" r="3.05"/><circle cx="199.1" cy="257.2" r="3.05"/><circle cx="201.6" cy="258.1" r="3.05"/><circle cx="204.0" cy="257.6" r="3.05"/><circle cx="206.4" cy="258.4" r="3.05"/><circle cx="208.8" cy="257.4" r="3.05"/><circle cx="211.2" cy="258.5" r="3.05"/><circle cx="213.6" cy="257.4" r="3.05"/><circle cx="216.0" cy="258.6" r="3.05"/><circle cx="218.4" cy="257.8" r="3.05"/><circle cx="220.9" cy="256.5" r="3.05"/><circle cx="223.3" cy="258.5" r="3.05"/><circle cx="225.7" cy="257.1" r="3.05"/><circle cx="228.1" cy="257.0" r="3.05"/><circle cx="230.5" cy="257.7" r="3.05"/><circle cx="232.9" cy="257.3" r="3.05"/><circle cx="235.3" cy="257.7" r="3.05"/><circle cx="237.8" cy="258.1" r="3.05"/><circle cx="240.2" cy="257.7" r="3.05"/><circle cx="242.6" cy="258.1" r="3.05"/><circle cx="245.0" cy="257.8" r="3.05"/><circle cx="247.4" cy="258.4" r="3.05"/><circle cx="249.8" cy="256.7" r="3.05"/><circle cx="252.2" cy="257.3" r="3.05"/><circle cx="254.7" cy="256.7" r="3.05"/><circle cx="257.1" cy="257.5" r="3.05"/><circle cx="259.5" cy="258.3" r="3.05"/><circle cx="261.9" cy="257.2" r="3.05"/><circle cx="264.3" cy="257.9" r="3.05"/><circle cx="266.7" cy="256.9" r="3.05"/><circle cx="269.1" cy="257.7" r="3.05"/><circle cx="271.6" cy="257.8" r="3.05"/><circle cx="274.0" cy="257.4" r="3.05"/><circle cx="276.4" cy="257.7" r="3.05"/><circle cx="278.8" cy="256.8" r="3.05"/><circle cx="281.2" cy="257.6" r="3.05"/><circle cx="283.6" cy="257.5" r="3.05"/><circle cx="286.0" cy="257.7" r="3.05"/><circle cx="288.4" cy="257.9" r="3.05"/><circle cx="290.9" cy="258.4" r="3.05"/><circle cx="293.3" cy="258.2" r="3.05"/><circle cx="295.7" cy="258.2" r="3.05"/><circle cx="298.1" cy="257.4" r="3.05"/><circle cx="300.5" cy="257.7" r="3.05"/><circle cx="302.9" cy="257.2" r="3.05"/><circle cx="305.3" cy="258.2" r="3.05"/><circle cx="307.8" cy="257.1" r="3.05"/><circle cx="310.2" cy="257.1" r="3.05"/><circle cx="312.6" cy="258.4" r="3.05"/><circle cx="315.0" cy="258.1" r="3.05"/><circle cx="315.0" cy="256.9" r="3.05"/><circle cx="318.6" cy="257.8" r="3.05"/><circle cx="322.1" cy="257.6" r="3.05"/><circle cx="325.7" cy="257.5" r="3.05"/><circle cx="329.3" cy="258.5" r="3.05"/><circle cx="332.8" cy="257.4" r="3.05"/><circle cx="336.4" cy="256.7" r="3.05"/><circle cx="340.0" cy="257.6" r="3.05"/><circle cx="343.5" cy="257.5" r="3.05"/><circle cx="347.1" cy="257.3" r="3.05"/><circle cx="350.7" cy="256.7" r="3.05"/><circle cx="354.2" cy="258.4" r="3.05"/><circle cx="357.8" cy="258.4" r="3.05"/><circle cx="361.3" cy="258.1" r="3.05"/><circle cx="364.9" cy="257.4" r="3.05"/><circle cx="368.5" cy="258.1" r="3.05"/><circle cx="372.0" cy="257.1" r="3.05"/><circle cx="375.6" cy="256.7" r="3.05"/><circle cx="379.2" cy="258.2" r="3.05"/><circle cx="382.7" cy="258.2" r="3.05"/><circle cx="386.3" cy="256.8" r="3.05"/><circle cx="389.9" cy="256.8" r="3.05"/><circle cx="393.4" cy="258.3" r="3.05"/><circle cx="397.0" cy="257.8" r="3.05"/><circle cx="417.2" cy="257.8" r="3.05"/><circle cx="419.2" cy="257.9" r="3.05"/><circle cx="421.3" cy="257.9" r="3.05"/><circle cx="423.3" cy="257.7" r="3.05"/><circle cx="425.4" cy="258.0" r="3.05"/><circle cx="427.4" cy="257.9" r="3.05"/><circle cx="429.5" cy="258.0" r="3.05"/><circle cx="431.5" cy="258.0" r="3.05"/><circle cx="446.7" cy="258" r="3.05"/><circle cx="455.7" cy="258.2" r="3.05"/><circle cx="458.0" cy="257.9" r="3.05"/><circle cx="460.3" cy="258.3" r="3.05"/><circle cx="462.7" cy="257.5" r="3.05"/><circle cx="465.0" cy="257.7" r="3.05"/><circle cx="467.3" cy="258.0" r="3.05"/><circle cx="469.6" cy="258.4" r="3.05"/><circle cx="472.0" cy="257.5" r="3.05"/><circle cx="474.3" cy="258.2" r="3.05"/><circle cx="476.6" cy="257.6" r="3.05"/><circle cx="465.7" cy="254.7" r="3.05"/><circle cx="490.9" cy="257.6" r="3.05"/><circle cx="493.4" cy="258.2" r="3.05"/><circle cx="495.9" cy="257.8" r="3.05"/><circle cx="498.4" cy="258.2" r="3.05"/><circle cx="500.9" cy="257.5" r="3.05"/><circle cx="503.4" cy="258.3" r="3.05"/><circle cx="505.9" cy="257.9" r="3.05"/><circle cx="508.4" cy="258.4" r="3.05"/><circle cx="510.9" cy="257.7" r="3.05"/><circle cx="518" cy="250.4" r="3.05"/><circle cx="539.4" cy="248" r="3.05"/><circle cx="549.4" cy="250" r="3.05"/><circle cx="529.9" cy="259.2" r="3.05"/><circle cx="532.2" cy="259.2" r="3.05"/><circle cx="534.5" cy="259.6" r="3.05"/><circle cx="536.9" cy="259.2" r="3.05"/><circle cx="539.2" cy="259.3" r="3.05"/><circle cx="541.5" cy="259.2" r="3.05"/><circle cx="543.8" cy="259.1" r="3.05"/><circle cx="546.2" cy="259.4" r="3.05"/><circle cx="548.5" cy="259.5" r="3.05"/><circle cx="550.8" cy="259.4" r="3.05"/><circle cx="556.5" cy="253.4" r="3.05"/><circle cx="558.8" cy="253.9" r="3.05"/><circle cx="561.1" cy="253.9" r="3.05"/><circle cx="563.3" cy="254.0" r="3.05"/><circle cx="565.6" cy="253.7" r="3.05"/><circle cx="567.9" cy="253.6" r="3.05"/><circle cx="565.1" cy="259" r="3.05"/><circle cx="570.8" cy="259.3" r="3.05"/><circle cx="573.1" cy="259.3" r="3.05"/><circle cx="575.4" cy="259.0" r="3.05"/><circle cx="577.7" cy="258.8" r="3.05"/><circle cx="580.1" cy="259.0" r="3.05"/><circle cx="582.4" cy="259.0" r="3.05"/><circle cx="584.7" cy="259.3" r="3.05"/><circle cx="587.0" cy="258.9" r="3.05"/></g><g fill="#ebd30a" fill-opacity="0.9"><circle cx="49.8" cy="85.8" r="3.05"/><circle cx="63.9" cy="83.1" r="3.05"/><circle cx="63.9" cy="85.5" r="3.05"/><circle cx="72" cy="86.1" r="3.05"/><circle cx="129.5" cy="82.9" r="3.05"/><circle cx="138.3" cy="82.9" r="3.05"/><circle cx="153.1" cy="80.7" r="3.05"/><circle cx="191.3" cy="83.7" r="3.05"/><circle cx="196.7" cy="89.4" r="3.05"/><circle cx="285.8" cy="94" r="3.05"/><circle cx="286.5" cy="97.4" r="3.05"/><circle cx="306.4" cy="92.4" r="3.05"/><circle cx="308.9" cy="101.2" r="3.05"/><circle cx="321.9" cy="91.9" r="3.05"/><circle cx="341.9" cy="105.7" r="3.05"/><circle cx="344.6" cy="107.3" r="3.05"/><circle cx="395.5" cy="108.9" r="3.05"/><circle cx="380.5" cy="73.5" r="3.05"/><circle cx="382.1" cy="73.5" r="3.05"/><circle cx="383.7" cy="73.5" r="3.05"/><circle cx="385.3" cy="73.3" r="3.05"/><circle cx="386.9" cy="73.3" r="3.05"/><circle cx="388.5" cy="73.4" r="3.05"/><circle cx="390.0" cy="73.5" r="3.05"/><circle cx="391.6" cy="73.4" r="3.05"/><circle cx="393.2" cy="73.3" r="3.05"/><circle cx="394.8" cy="73.3" r="3.05"/><circle cx="396.4" cy="73.4" r="3.05"/><circle cx="398.0" cy="73.3" r="3.05"/><circle cx="397.5" cy="97.6" r="3.05"/><circle cx="400" cy="97" r="3.05"/><circle cx="403.6" cy="96.6" r="3.05"/><circle cx="406.5" cy="97.3" r="3.05"/><circle cx="409.6" cy="98" r="3.05"/><circle cx="412" cy="99" r="3.05"/><circle cx="414.1" cy="100.3" r="3.05"/><circle cx="396.2" cy="109.1" r="3.05"/><circle cx="424.6" cy="104.3" r="3.05"/><circle cx="427.5" cy="104.5" r="3.05"/><circle cx="430.5" cy="104.8" r="3.05"/><circle cx="433.5" cy="105.1" r="3.05"/><circle cx="434.3" cy="108.8" r="3.05"/><circle cx="434.8" cy="111.5" r="3.05"/><circle cx="435" cy="114.5" r="3.05"/><circle cx="432.8" cy="119" r="3.05"/><circle cx="447.4" cy="123.8" r="3.05"/><circle cx="448.5" cy="110.0" r="3.05"/><circle cx="450.4" cy="109.9" r="3.05"/><circle cx="452.2" cy="109.9" r="3.05"/><circle cx="454.1" cy="109.6" r="3.05"/><circle cx="456.0" cy="109.7" r="3.05"/><circle cx="457.9" cy="110.0" r="3.05"/><circle cx="459.8" cy="109.9" r="3.05"/><circle cx="461.6" cy="109.7" r="3.05"/><circle cx="463.5" cy="109.5" r="3.05"/><circle cx="465.4" cy="110.0" r="3.05"/><circle cx="467.2" cy="109.6" r="3.05"/><circle cx="469.1" cy="109.8" r="3.05"/><circle cx="471.0" cy="109.7" r="3.05"/><circle cx="480.6" cy="111.8" r="3.05"/><circle cx="483" cy="112.5" r="3.05"/><circle cx="485.5" cy="113" r="3.05"/><circle cx="488.1" cy="113.3" r="3.05"/><circle cx="491" cy="113.3" r="3.05"/><circle cx="497" cy="110.3" r="3.05"/><circle cx="496.5" cy="114" r="3.05"/><circle cx="496.3" cy="117" r="3.05"/><circle cx="497" cy="120" r="3.05"/><circle cx="499" cy="109" r="3.05"/><circle cx="501.5" cy="108.8" r="3.05"/><circle cx="504" cy="109.3" r="3.05"/><circle cx="506" cy="110.3" r="3.05"/><circle cx="502.3" cy="114.8" r="3.05"/><circle cx="508" cy="112" r="3.05"/><circle cx="511.2" cy="110.8" r="3.05"/><circle cx="523.9" cy="109.3" r="3.05"/><circle cx="550.1" cy="109.6" r="3.05"/><circle cx="44" cy="222.4" r="3.05"/><circle cx="48.3" cy="221.4" r="3.05"/><circle cx="58.8" cy="222.8" r="3.05"/><circle cx="70.4" cy="220.5" r="3.05"/><circle cx="70.7" cy="225.7" r="3.05"/><circle cx="79.7" cy="220" r="3.05"/><circle cx="99.2" cy="221.4" r="3.05"/><circle cx="108" cy="222.6" r="3.05"/><circle cx="119.5" cy="221.2" r="3.05"/><circle cx="167.2" cy="220.5" r="3.05"/><circle cx="172.9" cy="221.4" r="3.05"/><circle cx="175.0" cy="222.2" r="3.05"/><circle cx="176.9" cy="221.8" r="3.05"/><circle cx="178.8" cy="221.9" r="3.05"/><circle cx="180.7" cy="222.6" r="3.05"/><circle cx="182.6" cy="222.0" r="3.05"/><circle cx="184.5" cy="222.4" r="3.05"/><circle cx="186.4" cy="222.6" r="3.05"/><circle cx="188.3" cy="222.3" r="3.05"/><circle cx="190.2" cy="222.6" r="3.05"/><circle cx="193.8" cy="222.6" r="3.05"/><circle cx="197.6" cy="222.2" r="3.05"/><circle cx="205.4" cy="223.8" r="3.05"/><circle cx="228.7" cy="225.7" r="3.05"/><circle cx="269.2" cy="222.4" r="3.05"/><circle cx="281" cy="221.6" r="3.05"/><circle cx="283.5" cy="222.4" r="3.05"/><circle cx="286" cy="223.2" r="3.05"/><circle cx="289" cy="224" r="3.05"/><circle cx="299.6" cy="223.5" r="3.05"/><circle cx="301.4" cy="224.1" r="3.05"/><circle cx="303.2" cy="223.6" r="3.05"/><circle cx="305.0" cy="223.5" r="3.05"/><circle cx="306.7" cy="224.3" r="3.05"/><circle cx="308.5" cy="224.2" r="3.05"/><circle cx="310.3" cy="224.0" r="3.05"/><circle cx="312.1" cy="223.9" r="3.05"/><circle cx="313.9" cy="223.8" r="3.05"/><circle cx="315.7" cy="224.5" r="3.05"/><circle cx="317.5" cy="224.8" r="3.05"/><circle cx="319.3" cy="224.9" r="3.05"/><circle cx="321.0" cy="224.9" r="3.05"/><circle cx="322.8" cy="225.0" r="3.05"/><circle cx="324.6" cy="224.2" r="3.05"/><circle cx="326.4" cy="225.1" r="3.05"/><circle cx="334.0" cy="224.7" r="3.05"/><circle cx="336.2" cy="224.9" r="3.05"/><circle cx="338.4" cy="224.9" r="3.05"/><circle cx="340.6" cy="224.6" r="3.05"/><circle cx="351.2" cy="223.8" r="3.05"/><circle cx="353.3" cy="224.5" r="3.05"/><circle cx="355.4" cy="224.7" r="3.05"/><circle cx="357.5" cy="225.2" r="3.05"/><circle cx="359.6" cy="225.9" r="3.05"/><circle cx="364" cy="226.9" r="3.05"/><circle cx="372.5" cy="219" r="3.05"/><circle cx="374.5" cy="225.1" r="3.05"/><circle cx="376.2" cy="225.6" r="3.05"/><circle cx="378.0" cy="225.9" r="3.05"/><circle cx="379.7" cy="225.0" r="3.05"/><circle cx="381.4" cy="225.6" r="3.05"/><circle cx="383.2" cy="225.2" r="3.05"/><circle cx="384.9" cy="225.6" r="3.05"/><circle cx="386.6" cy="226.1" r="3.05"/><circle cx="388.4" cy="225.3" r="3.05"/><circle cx="390.1" cy="225.9" r="3.05"/><circle cx="391.8" cy="226.0" r="3.05"/><circle cx="393.6" cy="226.0" r="3.05"/><circle cx="395.3" cy="225.4" r="3.05"/><circle cx="420.5" cy="226.0" r="3.05"/><circle cx="422.4" cy="226.6" r="3.05"/><circle cx="424.3" cy="226.0" r="3.05"/><circle cx="426.3" cy="226.7" r="3.05"/><circle cx="428.2" cy="226.4" r="3.05"/><circle cx="432.9" cy="228.5" r="3.05"/><circle cx="451.4" cy="229.5" r="3.05"/><circle cx="467.6" cy="229.3" r="3.05"/><circle cx="487.6" cy="229.5" r="3.05"/><circle cx="490.5" cy="229.2" r="3.05"/><circle cx="493.8" cy="229" r="3.05"/><circle cx="498.5" cy="229" r="3.05"/><circle cx="513.2" cy="223.8" r="3.05"/><circle cx="513.7" cy="229" r="3.05"/><circle cx="517.5" cy="229" r="3.05"/><circle cx="522.6" cy="228.6" r="3.05"/><circle cx="529.4" cy="228.5" r="3.05"/><circle cx="553.7" cy="226.4" r="3.05"/><circle cx="568.9" cy="226.4" r="3.05"/><circle cx="578.9" cy="226.4" r="3.05"/><circle cx="45.5" cy="239" r="3.05"/><circle cx="49.3" cy="240" r="3.05"/><circle cx="60.2" cy="239.7" r="3.05"/><circle cx="58.3" cy="244.2" r="3.05"/><circle cx="70.2" cy="239.5" r="3.05"/><circle cx="72.1" cy="237.1" r="3.05"/><circle cx="68.3" cy="244.7" r="3.05"/><circle cx="70.7" cy="249" r="3.05"/><circle cx="76.8" cy="245.2" r="3.05"/><circle cx="81.6" cy="242.3" r="3.05"/><circle cx="84" cy="239.5" r="3.05"/><circle cx="90.2" cy="240.4" r="3.05"/><circle cx="99.5" cy="240.4" r="3.05"/><circle cx="107.8" cy="240.4" r="3.05"/><circle cx="107.8" cy="246.1" r="3.05"/><circle cx="114.4" cy="240.4" r="3.05"/><circle cx="119.2" cy="243.8" r="3.05"/><circle cx="114.9" cy="247.6" r="3.05"/><circle cx="140.1" cy="243.8" r="3.05"/><circle cx="151.5" cy="243.3" r="3.05"/><circle cx="155.8" cy="246.6" r="3.05"/><circle cx="158.6" cy="247.6" r="3.05"/><circle cx="172" cy="247.6" r="3.05"/><circle cx="175.5" cy="245.7" r="3.05"/><circle cx="196.9" cy="240.4" r="3.05"/><circle cx="195.9" cy="246.1" r="3.05"/><circle cx="196.5" cy="243.2" r="3.05"/><circle cx="222.6" cy="241.4" r="3.05"/><circle cx="228.3" cy="242.3" r="3.05"/><circle cx="234" cy="247.1" r="3.05"/><circle cx="238.2" cy="247.6" r="3.05"/><circle cx="244" cy="240" r="3.05"/><circle cx="244.9" cy="247.6" r="3.05"/><circle cx="251.1" cy="248" r="3.05"/><circle cx="268.7" cy="241.4" r="3.05"/><circle cx="266.3" cy="247.1" r="3.05"/><circle cx="270.1" cy="247.6" r="3.05"/><circle cx="285.8" cy="241.9" r="3.05"/><circle cx="280.6" cy="248" r="3.05"/><circle cx="285.8" cy="248.5" r="3.05"/><circle cx="306.3" cy="249" r="3.05"/><circle cx="304" cy="247.5" r="3.05"/><circle cx="309" cy="250" r="3.05"/><circle cx="319.3" cy="242.4" r="3.05"/><circle cx="321.3" cy="241.8" r="3.05"/><circle cx="323.3" cy="242.3" r="3.05"/><circle cx="325.4" cy="242.2" r="3.05"/><circle cx="327.4" cy="241.8" r="3.05"/><circle cx="334" cy="242.3" r="3.05"/><circle cx="342.1" cy="242.3" r="3.05"/><circle cx="350.2" cy="242.3" r="3.05"/><circle cx="347.3" cy="242.8" r="3.05"/><circle cx="394.7" cy="236.6" r="3.05"/><circle cx="390.1" cy="242.8" r="3.05"/><circle cx="394.7" cy="248" r="3.05"/><circle cx="377.3" cy="247.1" r="3.05"/><circle cx="364.5" cy="249.5" r="3.05"/><circle cx="373" cy="249" r="3.05"/><circle cx="467.6" cy="244" r="3.05"/><circle cx="543.2" cy="243.3" r="3.05"/><circle cx="578.9" cy="243.1" r="3.05"/><circle cx="44" cy="255.2" r="3.05"/><circle cx="48.3" cy="257.6" r="3.05"/><circle cx="52.1" cy="257.3" r="3.05"/><circle cx="60.2" cy="255.2" r="3.05"/><circle cx="70.2" cy="254.2" r="3.05"/><circle cx="80.7" cy="254.2" r="3.05"/><circle cx="79.7" cy="258.5" r="3.05"/><circle cx="103" cy="254.2" r="3.05"/><circle cx="107.8" cy="254.2" r="3.05"/><circle cx="108.2" cy="259" r="3.05"/><circle cx="118.7" cy="256.6" r="3.05"/><circle cx="132" cy="257.4" r="3.05"/><circle cx="139.6" cy="254.2" r="3.05"/><circle cx="143.4" cy="258" r="3.05"/><circle cx="152" cy="255.2" r="3.05"/><circle cx="154.8" cy="257.6" r="3.05"/><circle cx="161.5" cy="254.7" r="3.05"/><circle cx="167.2" cy="254.5" r="3.05"/><circle cx="174.3" cy="257.1" r="3.05"/><circle cx="175.0" cy="256.0" r="3.05"/><circle cx="176.6" cy="254.8" r="3.05"/><circle cx="178.2" cy="257.7" r="3.05"/><circle cx="179.8" cy="255.6" r="3.05"/><circle cx="181.4" cy="257.9" r="3.05"/><circle cx="183.0" cy="256.5" r="3.05"/><circle cx="184.6" cy="255.4" r="3.05"/><circle cx="186.3" cy="255.7" r="3.05"/><circle cx="187.9" cy="255.0" r="3.05"/><circle cx="189.5" cy="257.3" r="3.05"/><circle cx="191.1" cy="257.2" r="3.05"/><circle cx="192.7" cy="256.7" r="3.05"/><circle cx="194.3" cy="256.1" r="3.05"/><circle cx="195.9" cy="255.0" r="3.05"/><circle cx="197.5" cy="254.9" r="3.05"/><circle cx="199.1" cy="257.4" r="3.05"/><circle cx="200.7" cy="255.8" r="3.05"/><circle cx="202.3" cy="255.2" r="3.05"/><circle cx="203.9" cy="257.8" r="3.05"/><circle cx="205.5" cy="255.9" r="3.05"/><circle cx="207.2" cy="256.5" r="3.05"/><circle cx="208.8" cy="257.7" r="3.05"/><circle cx="210.4" cy="256.9" r="3.05"/><circle cx="212.0" cy="256.8" r="3.05"/><circle cx="213.6" cy="255.8" r="3.05"/><circle cx="215.2" cy="257.1" r="3.05"/><circle cx="216.8" cy="256.7" r="3.05"/><circle cx="213.5" cy="252.8" r="3.05"/><circle cx="224.5" cy="258.2" r="3.05"/><circle cx="226.1" cy="257.4" r="3.05"/><circle cx="227.8" cy="257.8" r="3.05"/><circle cx="229.4" cy="257.8" r="3.05"/><circle cx="231.0" cy="257.4" r="3.05"/><circle cx="232.6" cy="256.5" r="3.05"/><circle cx="234.2" cy="257.9" r="3.05"/><circle cx="235.9" cy="257.7" r="3.05"/><circle cx="237.5" cy="256.5" r="3.05"/><circle cx="239.1" cy="257.6" r="3.05"/><circle cx="240.8" cy="258.0" r="3.05"/><circle cx="242.4" cy="257.0" r="3.05"/><circle cx="244.0" cy="256.8" r="3.05"/><circle cx="245.6" cy="257.6" r="3.05"/><circle cx="247.2" cy="255.3" r="3.05"/><circle cx="248.9" cy="255.9" r="3.05"/><circle cx="250.5" cy="255.2" r="3.05"/><circle cx="252.1" cy="256.5" r="3.05"/><circle cx="253.8" cy="255.7" r="3.05"/><circle cx="255.4" cy="255.1" r="3.05"/><circle cx="257.0" cy="256.8" r="3.05"/><circle cx="258.6" cy="255.5" r="3.05"/><circle cx="260.2" cy="256.1" r="3.05"/><circle cx="261.9" cy="256.6" r="3.05"/><circle cx="263.5" cy="255.8" r="3.05"/><circle cx="265.1" cy="257.1" r="3.05"/><circle cx="266.8" cy="257.8" r="3.05"/><circle cx="268.4" cy="257.3" r="3.05"/><circle cx="270.0" cy="255.6" r="3.05"/><circle cx="258" cy="253" r="3.05"/><circle cx="264" cy="251.5" r="3.05"/><circle cx="239" cy="252.8" r="3.05"/><circle cx="285.3" cy="257.6" r="3.05"/><circle cx="285.3" cy="253.8" r="3.05"/><circle cx="294.8" cy="258" r="3.05"/><circle cx="299.6" cy="253.7" r="3.05"/><circle cx="301.1" cy="256.2" r="3.05"/><circle cx="302.7" cy="252.5" r="3.05"/><circle cx="304.2" cy="254.5" r="3.05"/><circle cx="305.8" cy="257.8" r="3.05"/><circle cx="307.3" cy="257.1" r="3.05"/><circle cx="308.8" cy="255.1" r="3.05"/><circle cx="310.4" cy="254.5" r="3.05"/><circle cx="311.9" cy="255.7" r="3.05"/><circle cx="313.5" cy="254.0" r="3.05"/><circle cx="315.0" cy="253.4" r="3.05"/><circle cx="301.0" cy="250.1" r="3.05"/><circle cx="303.4" cy="250.7" r="3.05"/><circle cx="305.8" cy="250.9" r="3.05"/><circle cx="308.2" cy="250.9" r="3.05"/><circle cx="310.6" cy="249.9" r="3.05"/><circle cx="313.0" cy="250.4" r="3.05"/><circle cx="315.0" cy="256.3" r="3.05"/><circle cx="316.5" cy="255.1" r="3.05"/><circle cx="318.0" cy="255.9" r="3.05"/><circle cx="319.6" cy="255.4" r="3.05"/><circle cx="321.1" cy="257.0" r="3.05"/><circle cx="322.6" cy="254.0" r="3.05"/><circle cx="324.1" cy="253.8" r="3.05"/><circle cx="325.7" cy="254.3" r="3.05"/><circle cx="327.2" cy="255.3" r="3.05"/><circle cx="328.7" cy="255.3" r="3.05"/><circle cx="330.2" cy="253.5" r="3.05"/><circle cx="331.7" cy="253.8" r="3.05"/><circle cx="333.3" cy="254.2" r="3.05"/><circle cx="334.8" cy="256.7" r="3.05"/><circle cx="336.3" cy="253.5" r="3.05"/><circle cx="337.8" cy="255.4" r="3.05"/><circle cx="339.3" cy="255.1" r="3.05"/><circle cx="340.9" cy="254.7" r="3.05"/><circle cx="342.4" cy="257.1" r="3.05"/><circle cx="343.9" cy="255.4" r="3.05"/><circle cx="345.4" cy="255.0" r="3.05"/><circle cx="347.0" cy="253.6" r="3.05"/><circle cx="348.5" cy="257.3" r="3.05"/><circle cx="350.0" cy="257.6" r="3.05"/><circle cx="320.0" cy="250.1" r="3.05"/><circle cx="322.4" cy="251.6" r="3.05"/><circle cx="324.8" cy="251.2" r="3.05"/><circle cx="327.2" cy="250.6" r="3.05"/><circle cx="329.6" cy="251.7" r="3.05"/><circle cx="332.0" cy="250.5" r="3.05"/><circle cx="351.0" cy="256.5" r="3.05"/><circle cx="352.6" cy="256.4" r="3.05"/><circle cx="354.2" cy="256.5" r="3.05"/><circle cx="355.8" cy="258.3" r="3.05"/><circle cx="357.4" cy="256.1" r="3.05"/><circle cx="359.1" cy="255.8" r="3.05"/><circle cx="360.7" cy="257.9" r="3.05"/><circle cx="362.3" cy="258.2" r="3.05"/><circle cx="363.9" cy="256.9" r="3.05"/><circle cx="365.5" cy="257.8" r="3.05"/><circle cx="367.1" cy="258.3" r="3.05"/><circle cx="368.7" cy="257.4" r="3.05"/><circle cx="370.3" cy="257.4" r="3.05"/><circle cx="371.9" cy="258.2" r="3.05"/><circle cx="373.5" cy="257.0" r="3.05"/><circle cx="375.2" cy="257.2" r="3.05"/><circle cx="376.8" cy="255.7" r="3.05"/><circle cx="378.4" cy="258.1" r="3.05"/><circle cx="380.0" cy="258.0" r="3.05"/><circle cx="381.6" cy="257.7" r="3.05"/><circle cx="367.0" cy="254.4" r="3.05"/><circle cx="369.2" cy="253.2" r="3.05"/><circle cx="371.4" cy="253.3" r="3.05"/><circle cx="373.6" cy="253.2" r="3.05"/><circle cx="375.8" cy="253.7" r="3.05"/><circle cx="378.0" cy="254.3" r="3.05"/><circle cx="384.0" cy="257.1" r="3.05"/><circle cx="385.8" cy="257.1" r="3.05"/><circle cx="387.7" cy="257.0" r="3.05"/><circle cx="389.5" cy="258.3" r="3.05"/><circle cx="391.3" cy="257.2" r="3.05"/><circle cx="393.1" cy="258.2" r="3.05"/><circle cx="395.0" cy="257.1" r="3.05"/><circle cx="396.8" cy="258.1" r="3.05"/><circle cx="395.8" cy="252.8" r="3.05"/><circle cx="405.4" cy="257.1" r="3.05"/><circle cx="410.1" cy="256.1" r="3.05"/><circle cx="438.6" cy="257.6" r="3.05"/><circle cx="451" cy="255.2" r="3.05"/><circle cx="451.4" cy="255.2" r="3.05"/><circle cx="460.9" cy="258" r="3.05"/><circle cx="467" cy="255.2" r="3.05"/><circle cx="485.7" cy="258.2" r="3.05"/><circle cx="496.6" cy="258.5" r="3.05"/><circle cx="512.3" cy="257.1" r="3.05"/><circle cx="516.6" cy="258.5" r="3.05"/><circle cx="522.3" cy="250.9" r="3.05"/><circle cx="520.4" cy="254.6" r="3.05"/><circle cx="522.3" cy="255.6" r="3.05"/><circle cx="524.2" cy="254.1" r="3.05"/><circle cx="526.1" cy="255.4" r="3.05"/><circle cx="528.0" cy="254.3" r="3.05"/><circle cx="529.9" cy="254.7" r="3.05"/><circle cx="531.8" cy="254.6" r="3.05"/><circle cx="533.7" cy="254.7" r="3.05"/><circle cx="535.6" cy="255.5" r="3.05"/><circle cx="537.5" cy="255.6" r="3.05"/><circle cx="543.7" cy="248" r="3.05"/><circle cx="543.2" cy="251" r="3.05"/><circle cx="541.3" cy="253.3" r="3.05"/><circle cx="543.2" cy="254.5" r="3.05"/><circle cx="545.1" cy="253.3" r="3.05"/><circle cx="547.0" cy="253.9" r="3.05"/><circle cx="548.9" cy="254.0" r="3.05"/><circle cx="550.8" cy="254.3" r="3.05"/><circle cx="552.7" cy="253.9" r="3.05"/><circle cx="554.1" cy="250.9" r="3.05"/><circle cx="554.6" cy="256.6" r="3.05"/><circle cx="566.0" cy="254.7" r="3.05"/><circle cx="568.1" cy="254.3" r="3.05"/><circle cx="570.1" cy="254.4" r="3.05"/><circle cx="572.2" cy="254.6" r="3.05"/><circle cx="574.2" cy="254.5" r="3.05"/><circle cx="576.3" cy="254.4" r="3.05"/><circle cx="578.4" cy="253.9" r="3.05"/><circle cx="580.4" cy="253.7" r="3.05"/><circle cx="582.5" cy="254.8" r="3.05"/><circle cx="67.0" cy="245.3" r="3.05"/><circle cx="68.9" cy="242.6" r="3.05"/><circle cx="70.8" cy="243.4" r="3.05"/><circle cx="72.7" cy="245.8" r="3.05"/><circle cx="74.6" cy="245.3" r="3.05"/><circle cx="76.5" cy="242.7" r="3.05"/><circle cx="78.4" cy="242.4" r="3.05"/><circle cx="80.3" cy="243.1" r="3.05"/><circle cx="82.2" cy="243.8" r="3.05"/><circle cx="84.1" cy="241.0" r="3.05"/><circle cx="86.0" cy="244.1" r="3.05"/><circle cx="70.2" cy="237.5" r="3.05"/><circle cx="70.3" cy="241.5" r="3.05"/><circle cx="70.2" cy="246.8" r="3.05"/><circle cx="70.4" cy="251" r="3.05"/><circle cx="70.3" cy="253" r="3.05"/><circle cx="149.0" cy="241.8" r="3.05"/><circle cx="150.6" cy="242.4" r="3.05"/><circle cx="152.3" cy="245.6" r="3.05"/><circle cx="153.9" cy="245.1" r="3.05"/><circle cx="155.6" cy="244.9" r="3.05"/><circle cx="157.2" cy="244.8" r="3.05"/><circle cx="158.9" cy="248.1" r="3.05"/><circle cx="160.5" cy="248.9" r="3.05"/><circle cx="119.6" cy="242" r="3.05"/><circle cx="120.5" cy="245.5" r="3.05"/><circle cx="118.4" cy="244.2" r="3.05"/><circle cx="42.5" cy="222.3" r="3.05"/><circle cx="44.1" cy="221.5" r="3.05"/><circle cx="45.7" cy="222.8" r="3.05"/><circle cx="47.3" cy="222.2" r="3.05"/><circle cx="48.9" cy="221.9" r="3.05"/><circle cx="50.5" cy="222.2" r="3.05"/><circle cx="107.6" cy="243" r="3.05"/><circle cx="108" cy="256.6" r="3.05"/><circle cx="108.3" cy="251.5" r="3.05"/><circle cx="80.2" cy="256.4" r="3.05"/><circle cx="99.8" cy="241.6" r="3.05"/><circle cx="171.5" cy="245.8" r="3.05"/><circle cx="174" cy="249" r="3.05"/></g><rect x="595.6" y="12" width="29.800" height="245.700" fill="#e7eefd" stroke="#d6dff5" stroke-width="1.200"/><rect x="626" y="11.2" width="5" height="247.300" fill="#dde3f2"/><path d="M627 133h3M627 134.8h3M627 136.6h3" stroke="#fff" stroke-width=".8"/><path d="M595 11.9H626" stroke="#b4c0dc" stroke-width="1.500"/><rect x="601.3" y="8.5" width="18.400" height="6.800" rx="2" fill="#fff" stroke="#c3cde3" stroke-width="1.300"/><path d="M595 257.7H626" stroke="#b4c0dc" stroke-width="1.500"/><rect x="601.3" y="254.3" width="18.400" height="6.800" rx="2" fill="#fff" stroke="#c3cde3" stroke-width="1.300"/></svg>
</div>
</section>
<section class="card" style="top:842px;height:300px"></section>
</body></html>
